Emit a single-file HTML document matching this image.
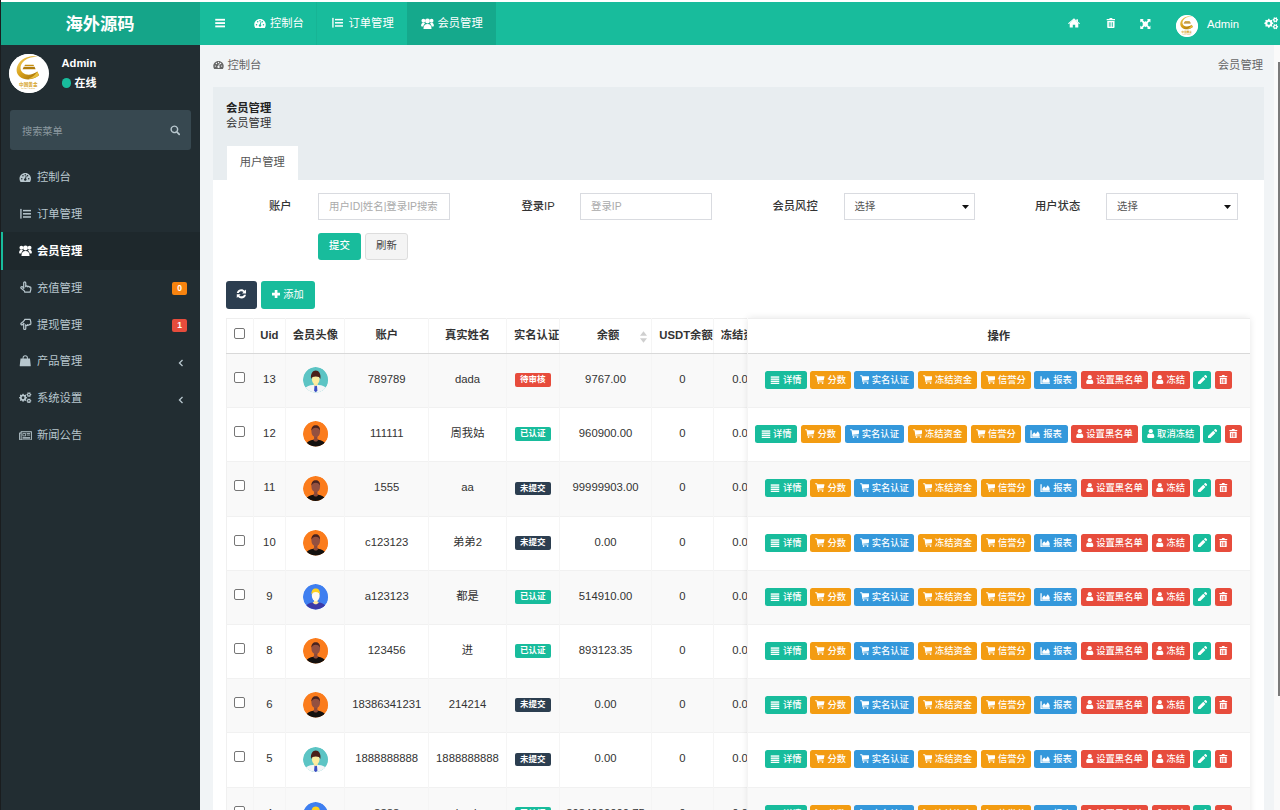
<!DOCTYPE html>
<html lang="zh-CN"><head><meta charset="utf-8"><title>会员管理</title>
<style>
*{box-sizing:border-box;margin:0;padding:0}
html,body{width:1280px;height:810px;overflow:hidden;background:#f1f4f6}
body{position:relative;font-family:"Liberation Sans","Noto Sans CJK SC",sans-serif;font-size:11.3px;color:#444;line-height:1.4}
svg{display:block}
.abs{position:absolute}
#topline{left:0;top:0;width:1280px;height:2px;background:#fff}
#leftline{left:0;top:0;width:1px;height:810px;background:#1a1d1f;z-index:50}
#logo{left:0;top:2px;width:200px;height:43px;background:#15a589;color:#fff;font-weight:bold;font-size:17.3px;text-align:center;line-height:44px;letter-spacing:0}
#nav{left:200px;top:2px;width:1080px;height:43px;background:#18bc9c;color:#fff}
#nav .tab{position:absolute;top:0;height:43px;line-height:43px;font-size:11.3px;white-space:nowrap}
#nav .tab svg{position:absolute}
#nav .tab span{position:absolute;top:0}
#side{left:0;top:45px;width:200px;height:765px;background:#222d32;color:#b8c7ce}
.avatar{border-radius:50%;background:#fff;overflow:hidden}
.mi{position:absolute;left:0;width:200px;height:36.8px;line-height:36.8px;font-size:11.3px;color:#b8c7ce}
.mi svg{position:absolute}
.mi span.t{position:absolute;left:37px;top:0.900px}
.mi.act{background:#1e282c;color:#fff;border-left:3px solid #18bc9c}
.mi.act span.t{left:34px;font-weight:bold}
.badge{position:absolute;left:172px;width:15px;height:12.500px;border-radius:2px;color:#fff;font-size:8.500px;font-weight:bold;line-height:12.500px;text-align:center}
#panel{left:213px;top:87px;width:1051px;height:740px;background:#fff}
#phead{left:0;top:0;width:1051px;height:93px;background:#e8edf0}
.lbl{position:absolute;font-size:11.3px;color:#333;font-weight:500;line-height:16px;white-space:nowrap}
.inp{position:absolute;height:26.500px;border:1px solid #d9dbe0;background:#fff;font-size:10.400px;color:#aaa;line-height:26px;padding-left:10px;white-space:nowrap}
.sel{color:#555}
.btn{position:absolute;border-radius:3px;color:#fff;text-align:center;white-space:nowrap}
table{border-collapse:collapse;table-layout:fixed}
#twrap table{width:547px;border-left:1px solid #f0f0f0;border-top:1px solid #eee}
th,td{border-right:1px solid #f5f5f5;text-align:center;vertical-align:middle;white-space:nowrap;overflow:hidden;padding:0;font-size:11.300px;color:#333}
th{height:35px;font-weight:bold;border-bottom:1px solid #d9d9d9;color:#333;background:#fff}
td{border-top:1px solid #f1f1f1}
tr.odd td{background:#f9f9f9}
tr.even td{background:#fff}
.cb{display:inline-block;width:11px;height:11px;border:1px solid #767676;border-radius:2px;background:#fff;position:relative;top:-1px}
.av{width:25.500px;height:25.500px;margin:0 auto;position:relative;top:0.600px;border-radius:50%;overflow:hidden}
.lab{display:inline-block;width:36px;height:13.500px;line-height:13px;border-radius:2px;color:#fff;font-size:8.500px;font-weight:bold;position:relative;top:-0.500px}
#fixcol{background:#fff;box-shadow:0 0 7px rgba(0,0,0,0.10)}
.ophead{height:36px;line-height:34px;text-align:center;font-weight:bold;color:#333;border-bottom:1px solid #d9d9d9;border-top:1px solid #eee;font-size:11.300px}
.oprow{text-align:center;white-space:nowrap;font-size:0;padding-top:17.200px;border-top:1px solid #f1f1f1}
.oprow.odd{background:#f9f9f9}
.ob{display:inline-block;height:18px;border-radius:2.500px;margin:0 1.780px;color:#fff;font-size:9.300px;font-weight:500;line-height:19.600px;vertical-align:top;white-space:nowrap;overflow:hidden;text-align:center}
.ob svg{display:inline-block;vertical-align:-1px;margin-right:2.500px}
.ob svg:last-child{margin-right:0}
.ob span{display:inline-block}
.suc{background:#18bc9c}.war{background:#f39c12}.inf{background:#3498db}.dan{background:#e74c3c}

td{padding-bottom:2px}
td:first-child{padding-bottom:0}
.ophead + .oprow{margin-top:-1px;border-top-color:#d9d9d9}

</style></head>
<body>
<div id="topline" class="abs"></div>
<div id="leftline" class="abs"></div>
<div id="logo" class="abs">海外源码</div>
<div id="nav" class="abs">
  <div class="abs" style="left:14.500px;top:15.800px"><svg width="10.500" height="10" viewBox="0 0 12 12" fill="currentColor" style=""><rect x="0" y="1" width="12" height="2.2"/><rect x="0" y="5" width="12" height="2.2"/><rect x="0" y="9" width="12" height="2.2"/></svg></div>
  <div class="tab" style="left:43px;width:74px"><div class="abs" style="left:10.500px;top:15.500px"><svg width="12" height="11" viewBox="0 0 14 13" fill="currentColor" style=""><path d="M7 1.2C3.2 1.2 0.2 4.2 0.2 7.9c0 1.3 0.4 2.5 1 3.5 0.1 0.2 0.3 0.3 0.5 0.3h10.6c0.2 0 0.4-0.1 0.5-0.3 0.6-1 1-2.2 1-3.5C13.8 4.2 10.8 1.2 7 1.2zM7 2.3a0.9 0.9 0 1 1 0 1.8 0.9 0.9 0 0 1 0-1.8zM2.9 8.8a0.9 0.9 0 1 1 0-1.8 0.9 0.9 0 0 1 0 1.8zM4.3 5.4a0.9 0.9 0 1 1 0-1.8 0.9 0.9 0 0 1 0 1.8zM8.6 5.1L7.9 7.8c0.5 0.3 0.8 0.9 0.6 1.5-0.2 0.8-1 1.3-1.8 1.1s-1.3-1-1.1-1.8c0.2-0.6 0.7-1 1.3-1.1l0.7-2.7c0.1-0.3 0.3-0.4 0.6-0.4 0.3 0.1 0.5 0.4 0.4 0.7zM9.7 5.4a0.9 0.9 0 1 1 0-1.8 0.9 0.9 0 0 1 0 1.8zM11.1 8.8a0.9 0.9 0 1 1 0-1.8 0.9 0.9 0 0 1 0 1.8z" fill-rule="evenodd"/></svg></div><span style="left:27px">控制台</span></div>
  <div class="tab" style="left:116px;width:90.500px;border-left:1px solid rgba(0,0,0,0.04)"><div class="abs" style="left:15px;top:15px"><svg width="11.500" height="11.500" viewBox="0 0 13 12" fill="currentColor" style=""><rect x="0.3" y="0.5" width="1.5" height="11"/><rect x="3.4" y="1.6" width="9" height="1.7"/><rect x="3.4" y="5.2" width="9" height="1.7"/><rect x="3.4" y="8.8" width="9" height="1.7"/></svg></div><span style="left:31.500px">订单管理</span></div>
  <div class="tab" style="left:206.500px;width:89.500px;background:#15a98c"><div class="abs" style="left:14px;top:15.500px"><svg width="13" height="11.500" viewBox="0 0 14 12.600" fill="currentColor" style=""><circle cx="7" cy="3.300" r="2.700"/><path d="M2.600 11.600c0-3.200 1.500-5 4.400-5s4.400 1.800 4.400 5c0 0.600-0.400 1-1 1H3.600c-0.600 0-1-0.400-1-1z"/><circle cx="2.500" cy="3" r="2.100"/><circle cx="11.500" cy="3" r="2.100"/><path d="M0 8.600c0-2.200 1-3.300 2.600-3.300 0.700 0 1.300 0.200 1.700 0.600C3.200 6.900 2.500 8 2.400 9.300H0.700C0.300 9.300 0 9 0 8.600zM14 8.600c0-2.200-1-3.300-2.600-3.300-0.700 0-1.300 0.200-1.700 0.600 1.100 1 1.800 2.100 1.900 3.400h1.700c0.400 0 0.700-0.300 0.700-0.700z"/></svg></div><span style="left:31px">会员管理</span></div>
  <div class="abs" style="left:868px;top:16.400px"><svg width="12" height="10" viewBox="0 0 14 11.500" fill="currentColor" style=""><path d="M7 1.800l5 4.200v4.600c0 0.300-0.200 0.500-0.500 0.500H8.400V7.800H5.600v3.300H2.500c-0.300 0-0.500-0.200-0.500-0.500V6L7 1.800z"/><path d="M7 0.300l2.800 2.400V1.500c0-0.100 0.100-0.200 0.200-0.200h1.400c0.100 0 0.200 0.100 0.200 0.200v2.700l2.200 1.900c0.100 0.100 0.100 0.200 0 0.300l-0.500 0.600c-0.100 0.100-0.200 0.100-0.300 0L7 1.900 1 7c-0.100 0.100-0.200 0.100-0.300 0L0.200 6.400c-0.100-0.100-0.100-0.200 0-0.300L7 0.300z"/></svg></div>
  <div class="abs" style="left:905.500px;top:16.200px"><svg width="9.800" height="10.200" viewBox="0.500 0 11 12" fill="currentColor" style=""><path fill-rule="evenodd" d="M4 1.200L4.500 0.300C4.600 0.100 4.800 0 5 0h2c0.200 0 0.400 0.100 0.500 0.300L8 1.200h2.500c0.300 0 0.500 0.200 0.500 0.500v0.600c0 0.200-0.100 0.300-0.300 0.300H1.300C1.100 2.600 1 2.500 1 2.300V1.700c0-0.300 0.200-0.500 0.500-0.500H4zM1.700 3.400h8.600v7.300c0 0.700-0.600 1.300-1.300 1.300H3c-0.700 0-1.300-0.600-1.300-1.300V3.400zM3.600 5v5.200h0.900V5H3.600zM5.500 5v5.200h0.900V5H5.500zM7.400 5v5.200h0.900V5H7.400z"/></svg></div>
  <div class="abs" style="left:940.300px;top:16.600px"><svg width="10.700" height="10.200" viewBox="0 0 12 12" fill="currentColor" style=""><path d="M0 0h4.200L2.900 1.300 5 3.400 6 2.400 7 3.400 9.100 1.300 7.800 0H12v4.200L10.700 2.900 8.600 5l1 1-1 1 2.100 2.100L12 7.800V12H7.800l1.300-1.300L7 8.600 6 9.600 5 8.600 2.900 10.700 4.200 12H0V7.800l1.300 1.300L3.400 7l-1-1 1-1L1.300 2.900 0 4.200z"/></svg></div>
  <div class="abs avatar" style="left:976px;top:12.500px;width:22px;height:22px"><svg width="22" height="22" viewBox="0 0 40 40"><defs><linearGradient id="gga" x1="0" y1="0" x2="1" y2="1"><stop offset="0" stop-color="#f3d266"/><stop offset="0.45" stop-color="#d9a21b"/><stop offset="1" stop-color="#9a6a08"/></linearGradient></defs><circle cx="20" cy="20" r="20" fill="#fff"/><path d="M29.500 2.900C24 1.600 16 2.600 11 8 6.500 13 6.800 19.500 11 23c5 4.200 14 3.600 19.500-1.400l-1.800-3.800C24 21.500 17.500 22 14 19 10.500 16 11 10.500 15.500 6.800 19.500 3.600 25 2.800 29.500 2.900z" fill="url(#gga)"/><path d="M16.300 10.800h8.600l0.500 1.500h-9.800z" fill="#c58f12"/><path d="M15 13h11l1 2.400H13.800z" fill="#b17c0c"/><path d="M28.700 17.800l1.800 3.800c-3 2.600-7 3.600-10.500 3.400 3.500-1 6.500-3.400 8.700-7.200z" fill="#e8bf3c"/><text x="19.600" y="33" font-size="4.700" font-weight="bold" text-anchor="middle" fill="#d6a11c" font-family="'Liberation Sans','Noto Sans CJK SC',sans-serif">中国黄金</text><text x="19.500" y="35.900" font-size="2.300" text-anchor="middle" fill="#d6a11c" font-family="'Liberation Sans',sans-serif">CHINA GOLD</text></svg></div>
  <div class="abs" style="left:1007px;top:1.300px;line-height:43px;font-size:11.300px">Admin</div>
  <div class="abs" style="left:1062.500px;top:15.300px"><svg width="16.500" height="12.500" viewBox="0 0 14.500 13" fill="currentColor" style=""><path fill-rule="evenodd" d="M9.37 5.95 L9.37 7.05 L8.26 7.51 L7.93 8.30 L8.39 9.42 L7.62 10.19 L6.50 9.73 L5.71 10.06 L5.25 11.17 L4.15 11.17 L3.69 10.06 L2.90 9.73 L1.78 10.19 L1.01 9.42 L1.47 8.30 L1.14 7.51 L0.03 7.05 L0.03 5.95 L1.14 5.49 L1.47 4.70 L1.01 3.58 L1.78 2.81 L2.90 3.27 L3.69 2.94 L4.15 1.83 L5.25 1.83 L5.71 2.94 L6.50 3.27 L7.62 2.81 L8.39 3.58 L7.93 4.70 L8.26 5.49Z M3.10 6.50 a1.60 1.60 0 1 0 3.20 0 a1.60 1.60 0 1 0 -3.20 0Z M14.35 2.38 L14.35 3.42 L13.57 3.64 L13.17 4.33 L13.38 5.11 L12.47 5.63 L11.90 5.06 L11.10 5.06 L10.53 5.63 L9.62 5.11 L9.83 4.33 L9.43 3.64 L8.65 3.42 L8.65 2.38 L9.43 2.16 L9.83 1.47 L9.62 0.69 L10.53 0.17 L11.10 0.74 L11.90 0.74 L12.47 0.17 L13.38 0.69 L13.17 1.47 L13.57 2.16Z M10.60 2.90 a0.90 0.90 0 1 0 1.80 0 a0.90 0.90 0 1 0 -1.80 0Z M14.35 9.58 L14.35 10.62 L13.57 10.84 L13.17 11.53 L13.38 12.31 L12.47 12.83 L11.90 12.26 L11.10 12.26 L10.53 12.83 L9.62 12.31 L9.83 11.53 L9.43 10.84 L8.65 10.62 L8.65 9.58 L9.43 9.36 L9.83 8.67 L9.62 7.89 L10.53 7.37 L11.10 7.94 L11.90 7.94 L12.47 7.37 L13.38 7.89 L13.17 8.67 L13.57 9.36Z M10.60 10.10 a0.90 0.90 0 1 0 1.80 0 a0.90 0.90 0 1 0 -1.80 0Z"/></svg></div>
</div>
<div id="side" class="abs">
  <div class="abs avatar" style="left:9.400px;top:8.600px;width:39.400px;height:39.400px"><svg width="39.4" height="39.4" viewBox="0 0 40 40"><defs><linearGradient id="ggb" x1="0" y1="0" x2="1" y2="1"><stop offset="0" stop-color="#f3d266"/><stop offset="0.45" stop-color="#d9a21b"/><stop offset="1" stop-color="#9a6a08"/></linearGradient></defs><circle cx="20" cy="20" r="20" fill="#fff"/><path d="M29.500 2.900C24 1.600 16 2.600 11 8 6.500 13 6.800 19.500 11 23c5 4.200 14 3.600 19.500-1.400l-1.800-3.800C24 21.500 17.500 22 14 19 10.500 16 11 10.500 15.500 6.800 19.500 3.600 25 2.800 29.500 2.900z" fill="url(#ggb)"/><path d="M16.300 10.800h8.600l0.500 1.500h-9.800z" fill="#c58f12"/><path d="M15 13h11l1 2.400H13.800z" fill="#b17c0c"/><path d="M28.700 17.800l1.800 3.800c-3 2.600-7 3.600-10.500 3.400 3.500-1 6.500-3.400 8.700-7.200z" fill="#e8bf3c"/><text x="19.600" y="33" font-size="4.700" font-weight="bold" text-anchor="middle" fill="#d6a11c" font-family="'Liberation Sans','Noto Sans CJK SC',sans-serif">中国黄金</text><text x="19.500" y="35.900" font-size="2.300" text-anchor="middle" fill="#d6a11c" font-family="'Liberation Sans',sans-serif">CHINA GOLD</text></svg></div>
  <div class="abs" style="left:61.500px;top:9.400px;color:#fff;font-weight:bold;font-size:11.200px;line-height:18px">Admin</div>
  <div class="abs" style="left:61.500px;top:33px;width:9.500px;height:9.500px;border-radius:50%;background:#18bc9c"></div>
  <div class="abs" style="left:74.500px;top:28.500px;color:#fff;font-weight:bold;font-size:11px;line-height:18px">在线</div>
  <div class="abs" style="left:9.500px;top:65px;width:181.500px;height:40px;border-radius:3px;background:#374850"></div>
  <div class="abs" style="left:22px;top:66.500px;line-height:40px;font-size:10.200px;color:#8b989f">搜索菜单</div>
  <div class="abs" style="left:169.500px;top:80px;color:#b8c7ce"><svg width="10.500" height="10.500" viewBox="0 0 12.500 12.500" fill="currentColor" style=""><path fill-rule="evenodd" d="M5.200 0.500a4.700 4.700 0 0 1 3.900 7.300l2.600 2.600c0.400 0.400 0.400 1 0 1.400s-1 0.400-1.400 0L7.700 9.200A4.700 4.700 0 1 1 5.200 0.500zM5.200 2.200a3 3 0 1 0 0 6 3 3 0 0 0 0-6z"/></svg></div>

  <div class="mi" style="top:113.600px"><div class="abs" style="left:19px;top:13px"><svg width="12.500" height="11" viewBox="0 0 14 13" fill="currentColor" style=""><path d="M7 1.2C3.2 1.2 0.2 4.2 0.2 7.9c0 1.3 0.4 2.5 1 3.5 0.1 0.2 0.3 0.3 0.5 0.3h10.6c0.2 0 0.4-0.1 0.5-0.3 0.6-1 1-2.2 1-3.5C13.8 4.2 10.8 1.2 7 1.2zM7 2.3a0.9 0.9 0 1 1 0 1.8 0.9 0.9 0 0 1 0-1.8zM2.9 8.8a0.9 0.9 0 1 1 0-1.8 0.9 0.9 0 0 1 0 1.8zM4.3 5.4a0.9 0.9 0 1 1 0-1.8 0.9 0.9 0 0 1 0 1.8zM8.6 5.1L7.9 7.8c0.5 0.3 0.8 0.9 0.6 1.5-0.2 0.8-1 1.3-1.8 1.1s-1.3-1-1.1-1.8c0.2-0.6 0.7-1 1.3-1.1l0.7-2.7c0.1-0.3 0.3-0.4 0.6-0.4 0.3 0.1 0.5 0.4 0.4 0.7zM9.7 5.4a0.9 0.9 0 1 1 0-1.8 0.9 0.9 0 0 1 0 1.8zM11.1 8.8a0.9 0.9 0 1 1 0-1.8 0.9 0.9 0 0 1 0 1.8z" fill-rule="evenodd"/></svg></div><span class="t">控制台</span></div>
  <div class="mi" style="top:150.400px"><div class="abs" style="left:19.500px;top:12.500px"><svg width="11.500" height="11.500" viewBox="0 0 13 12" fill="currentColor" style=""><rect x="0.3" y="0.5" width="1.5" height="11"/><rect x="3.4" y="1.6" width="9" height="1.7"/><rect x="3.4" y="5.2" width="9" height="1.7"/><rect x="3.4" y="8.8" width="9" height="1.7"/></svg></div><span class="t">订单管理</span></div>
  <div class="mi act" style="top:187.200px;height:38px"><div class="abs" style="left:16px;top:12.500px"><svg width="13" height="11.500" viewBox="0 0 14 12.600" fill="currentColor" style=""><circle cx="7" cy="3.300" r="2.700"/><path d="M2.600 11.600c0-3.200 1.500-5 4.400-5s4.400 1.800 4.400 5c0 0.600-0.400 1-1 1H3.600c-0.600 0-1-0.400-1-1z"/><circle cx="2.500" cy="3" r="2.100"/><circle cx="11.500" cy="3" r="2.100"/><path d="M0 8.600c0-2.200 1-3.300 2.600-3.300 0.700 0 1.300 0.200 1.700 0.600C3.200 6.900 2.500 8 2.400 9.300H0.700C0.300 9.300 0 9 0 8.600zM14 8.600c0-2.200-1-3.300-2.600-3.300-0.700 0-1.300 0.200-1.700 0.600 1.100 1 1.800 2.100 1.900 3.400h1.700c0.400 0 0.700-0.300 0.700-0.700z"/></svg></div><span class="t">会员管理</span></div>
  <div class="mi" style="top:224px"><div class="abs" style="left:19.500px;top:12px"><svg width="12" height="12.500" viewBox="0.500 0 12.300 12.500" fill="currentColor" style=""><g fill="none" stroke="currentColor" stroke-width="1.250" stroke-linejoin="round" stroke-linecap="round"><path d="M4.300 7.200V1.900a1.050 1.050 0 0 1 2.100 0V5.300"/><path d="M6.400 5.600a0.950 0.950 0 0 1 1.900 0.200a0.950 0.950 0 0 1 1.800 0.400a0.900 0.900 0 0 1 1.500 0.800V8.200c0 1.200-0.700 1.900-0.700 3.100H5.400c0-0.900-0.400-1.400-1.500-2.200L1.700 7.300a1 1 0 0 1 1.300-1.500L4.300 7"/></g></svg></div><span class="t">充值管理</span><div class="badge" style="top:13.300px;background:#f7830f">0</div></div>
  <div class="mi" style="top:260.800px"><div class="abs" style="left:19.500px;top:12px"><svg width="12" height="12.500" viewBox="0.500 0 12.300 12.500" fill="currentColor" style=""><g transform="translate(0 12.500) scale(1 -1)"><g fill="none" stroke="currentColor" stroke-width="1.250" stroke-linejoin="round" stroke-linecap="round"><path d="M4.300 7.200V1.900a1.050 1.050 0 0 1 2.100 0V5.300"/><path d="M6.400 5.600a0.950 0.950 0 0 1 1.900 0.200a0.950 0.950 0 0 1 1.800 0.400a0.900 0.900 0 0 1 1.500 0.800V8.200c0 1.200-0.700 1.900-0.700 3.100H5.400c0-0.900-0.400-1.400-1.500-2.200L1.700 7.300a1 1 0 0 1 1.300-1.500L4.300 7"/></g></g></svg></div><span class="t">提现管理</span><div class="badge" style="top:13.300px;background:#e74c3c">1</div></div>
  <div class="mi" style="top:297.600px"><div class="abs" style="left:19px;top:12px"><svg width="12.500" height="12" viewBox="0 0 14 13" fill="currentColor" style=""><path d="M4 3.600V3a3 3 0 0 1 6 0v0.600h2.300l0.900 8.200c0 0.400-0.300 0.700-0.700 0.700H1.500c-0.400 0-0.700-0.300-0.700-0.700l0.900-8.200H4zM5.100 3.600h3.800V3a1.900 1.900 0 0 0-3.800 0v0.600z" fill-rule="evenodd"/></svg></div><span class="t">产品管理</span><div class="abs" style="left:178.300px;top:16.200px"><svg width="5.500" height="8" viewBox="0 0 7 10.400" fill="currentColor" style=""><path d="M5.200 0.600L6.400 1.800 3 5.200 6.400 8.600 5.200 9.800 0.600 5.200z"/></svg></div></div>
  <div class="mi" style="top:334.400px"><div class="abs" style="left:19px;top:12.500px"><svg width="12.500" height="11.500" viewBox="0 0 14.500 13" fill="currentColor" style=""><path fill-rule="evenodd" d="M9.37 5.95 L9.37 7.05 L8.26 7.51 L7.93 8.30 L8.39 9.42 L7.62 10.19 L6.50 9.73 L5.71 10.06 L5.25 11.17 L4.15 11.17 L3.69 10.06 L2.90 9.73 L1.78 10.19 L1.01 9.42 L1.47 8.30 L1.14 7.51 L0.03 7.05 L0.03 5.95 L1.14 5.49 L1.47 4.70 L1.01 3.58 L1.78 2.81 L2.90 3.27 L3.69 2.94 L4.15 1.83 L5.25 1.83 L5.71 2.94 L6.50 3.27 L7.62 2.81 L8.39 3.58 L7.93 4.70 L8.26 5.49Z M3.10 6.50 a1.60 1.60 0 1 0 3.20 0 a1.60 1.60 0 1 0 -3.20 0Z M14.35 2.38 L14.35 3.42 L13.57 3.64 L13.17 4.33 L13.38 5.11 L12.47 5.63 L11.90 5.06 L11.10 5.06 L10.53 5.63 L9.62 5.11 L9.83 4.33 L9.43 3.64 L8.65 3.42 L8.65 2.38 L9.43 2.16 L9.83 1.47 L9.62 0.69 L10.53 0.17 L11.10 0.74 L11.90 0.74 L12.47 0.17 L13.38 0.69 L13.17 1.47 L13.57 2.16Z M10.60 2.90 a0.90 0.90 0 1 0 1.80 0 a0.90 0.90 0 1 0 -1.80 0Z M14.35 9.58 L14.35 10.62 L13.57 10.84 L13.17 11.53 L13.38 12.31 L12.47 12.83 L11.90 12.26 L11.10 12.26 L10.53 12.83 L9.62 12.31 L9.83 11.53 L9.43 10.84 L8.65 10.62 L8.65 9.58 L9.43 9.36 L9.83 8.67 L9.62 7.89 L10.53 7.37 L11.10 7.94 L11.90 7.94 L12.47 7.37 L13.38 7.89 L13.17 8.67 L13.57 9.36Z M10.60 10.10 a0.90 0.90 0 1 0 1.80 0 a0.90 0.90 0 1 0 -1.80 0Z"/></svg></div><span class="t">系统设置</span><div class="abs" style="left:178.300px;top:16.200px"><svg width="5.500" height="8" viewBox="0 0 7 10.400" fill="currentColor" style=""><path d="M5.200 0.600L6.400 1.800 3 5.200 6.400 8.600 5.200 9.800 0.600 5.200z"/></svg></div></div>
  <div class="mi" style="top:371.200px"><div class="abs" style="left:18.500px;top:13.500px"><svg width="13" height="10" viewBox="0 0 14 11" fill="currentColor" style=""><path fill-rule="evenodd" d="M2.200 1.500h11.300c0.300 0 0.500 0.200 0.500 0.500v8.300c0 0.700-0.600 1.200-1.200 1.200H1.400C0.600 11.500 0 10.900 0 10.200V3.300c0-0.300 0.200-0.500 0.500-0.500h1.200V2c0-0.300 0.200-0.500 0.500-0.500zM2.700 2.500v7.700c0 0.200-0.100 0.300-0.300 0.300h10.400c0.100 0 0.200-0.100 0.200-0.200V2.500H2.700zM1 3.800v6.400c0 0.200 0.100 0.300 0.300 0.300s0.400-0.100 0.400-0.300V3.800H1z"/><rect x="3.700" y="3.500" width="3.700" height="3.400"/><rect x="4.500" y="4.300" width="2.100" height="1.800" fill="#222d32"/><rect x="8.300" y="3.500" width="3.800" height="0.900"/><rect x="8.300" y="5.100" width="3.800" height="0.900"/><rect x="3.700" y="7.700" width="8.400" height="0.900"/><rect x="3.700" y="9" width="8.400" height="0.700"/></svg></div><span class="t">新闻公告</span></div>
</div>

<div class="abs" style="left:213px;top:60px;color:#666"><svg width="11" height="10" viewBox="0 0 14 13" fill="currentColor" style=""><path d="M7 1.2C3.2 1.2 0.2 4.2 0.2 7.9c0 1.3 0.4 2.5 1 3.5 0.1 0.2 0.3 0.3 0.5 0.3h10.6c0.2 0 0.4-0.1 0.5-0.3 0.6-1 1-2.2 1-3.5C13.8 4.2 10.8 1.2 7 1.2zM7 2.3a0.9 0.9 0 1 1 0 1.8 0.9 0.9 0 0 1 0-1.8zM2.9 8.8a0.9 0.9 0 1 1 0-1.8 0.9 0.9 0 0 1 0 1.8zM4.3 5.4a0.9 0.9 0 1 1 0-1.8 0.9 0.9 0 0 1 0 1.8zM8.6 5.1L7.9 7.8c0.5 0.3 0.8 0.9 0.6 1.5-0.2 0.8-1 1.3-1.8 1.1s-1.3-1-1.1-1.8c0.2-0.6 0.7-1 1.3-1.1l0.7-2.7c0.1-0.3 0.3-0.4 0.6-0.4 0.3 0.1 0.5 0.4 0.4 0.7zM9.7 5.4a0.9 0.9 0 1 1 0-1.8 0.9 0.9 0 0 1 0 1.8zM11.1 8.8a0.9 0.9 0 1 1 0-1.8 0.9 0.9 0 0 1 0 1.8z" fill-rule="evenodd"/></svg></div>
<div class="abs" style="left:227.500px;top:57px;line-height:16px;color:#666;font-size:11.300px">控制台</div>
<div class="abs" style="right:17px;top:57px;line-height:16px;color:#666;font-size:11.300px">会员管理</div>

<div id="panel" class="abs">
  <div id="phead" class="abs"></div>
  <div class="abs" style="left:13px;top:12.500px;font-weight:bold;color:#222;line-height:16px">会员管理</div>
  <div class="abs" style="left:13px;top:28px;color:#333;line-height:16px">会员管理</div>
  <div class="abs" style="left:13.500px;top:59px;width:71.500px;height:34px;background:#fff;text-align:center;line-height:32px;color:#555">用户管理</div>

  <div class="lbl" style="left:56px;top:111px">账户</div>
  <div class="inp" style="left:105px;top:106px;width:131.500px">用户ID|姓名|登录IP搜索</div>
  <div class="lbl" style="left:308.500px;top:111px">登录IP</div>
  <div class="inp" style="left:367px;top:106px;width:132px">登录IP</div>
  <div class="lbl" style="left:559.500px;top:111px">会员风控</div>
  <div class="inp sel" style="left:630.500px;top:106px;width:131.500px">选择<div class="abs" style="left:117px;top:10.500px;color:#111"><svg width="7" height="4" viewBox="0 0 8 4.500" fill="currentColor" style=""><path d="M0 0h8L4 4.500z"/></svg></div></div>
  <div class="lbl" style="left:822px;top:111px">用户状态</div>
  <div class="inp sel" style="left:893px;top:106px;width:132px">选择<div class="abs" style="left:117px;top:10.500px;color:#111"><svg width="7" height="4" viewBox="0 0 8 4.500" fill="currentColor" style=""><path d="M0 0h8L4 4.500z"/></svg></div></div>

  <div class="btn" style="left:105px;top:146px;width:43px;height:26.500px;background:#18bc9c;line-height:26.500px;font-size:10.400px;font-weight:500">提交</div>
  <div class="btn" style="left:152px;top:146px;width:43px;height:26.500px;background:#f4f4f4;border:1px solid #ddd;color:#444;line-height:24.500px;font-size:10.400px">刷新</div>

  <div class="btn" style="left:13px;top:194px;width:31px;height:28px;background:#2c3e50"><div class="abs" style="left:10.400px;top:8.400px"><svg width="10.800" height="9.600" viewBox="0.600 0.600 10.800 10.800" fill="currentColor" style=""><path d="M11.200 7h-2.300c-0.500 1.200-1.600 1.900-2.900 1.900-0.900 0-1.700-0.400-2.300-1l1.500-1.500H0.800v4.400l1.400-1.400C3.200 10.500 4.500 11.200 6 11.200c2.600 0 4.800-1.800 5.200-4.200zM0.800 5h2.300C3.600 3.800 4.700 3.100 6 3.100c0.900 0 1.700 0.400 2.300 1L6.800 5.600h4.400V1.200L9.800 2.600C8.800 1.500 7.500 0.800 6 0.800 3.400 0.800 1.200 2.600 0.800 5z"/></svg></div></div>
  <div class="btn" style="left:47.700px;top:194px;width:54.500px;height:28px;background:#18bc9c;line-height:27px;font-size:10.200px;font-weight:normal;text-align:left"><div class="abs" style="left:11.200px;top:8.800px"><svg width="8.200" height="8.200" viewBox="0 0 11 11" fill="currentColor" style=""><path d="M3.700 0h3.600v3.700H11v3.600H7.300V11H3.700V7.300H0V3.700h3.700z"/></svg></div><span style="position:absolute;left:22.600px">添加</span></div>

  <div class="abs" id="twrap" style="left:13px;top:231px;width:521px;height:520px;overflow:hidden">
   <table>
    <colgroup><col style="width:26.500px"><col style="width:32.800px"><col style="width:59.100px"><col style="width:83.600px"><col style="width:78px"><col style="width:52.700px"><col style="width:92.700px"><col style="width:61.300px"><col style="width:60px"></colgroup>
    <thead><tr><th><i class="cb" style="top:0"></i></th><th>Uid</th><th>会员头像</th><th>账户</th><th>真实姓名</th><th style="text-align:left;padding-left:7px">实名认证</th><th style="position:relative;padding-left:5px">余额<div class="abs" style="right:4.500px;top:11.500px;color:#cfcfcf"><svg width="7" height="12" viewBox="0 0 6 10" fill="currentColor"><path d="M0 4L3 0l3 4zM0 6h6L3 10z"/></svg></div></th><th style="text-align:left;padding-left:7px">USDT余额</th><th class="cut" style="text-align:left;padding-left:7px">冻结资金</th></tr></thead>
    <tbody>
<tr class="odd" style="height:54px"><td><i class="cb"></i></td><td>13</td><td><div class="av"><svg width="25.500" height="25.500" viewBox="0 0 26 26"><circle cx="13" cy="13" r="13" fill="#5cc4c4"/><path d="M2.600 20.800C5.500 18.600 9 18 13 18s7.500 0.600 10.400 2.800A13 13 0 0 1 2.600 20.800z" fill="#f3f5f6"/><path d="M11.800 18.900h2.400l0.500 5.300-1.700 1.500-1.700-1.500z" fill="#3b50c4"/><path d="M11 15.500h4v2.800l-2 1.300-2-1.300z" fill="#fbe59a"/><ellipse cx="13" cy="12.800" rx="3.900" ry="4.900" fill="#fcec9f"/><path d="M8.300 12.200C7.400 6.500 10 3.500 13 3.500s5.600 3 4.700 8.700C17 10.300 15.600 9.600 13 9.600s-4 0.700-4.700 2.600z" fill="#4a1f1a"/></svg></div></td><td>789789</td><td>dada</td><td><span class="lab" style="background:#e74c3c">待审核</span></td><td>9767.00</td><td>0</td><td class="cut">0.00</td></tr>
<tr class="even" style="height:54px"><td><i class="cb"></i></td><td>12</td><td><div class="av"><svg width="25.500" height="25.500" viewBox="0 0 26 26"><circle cx="13" cy="13" r="13" fill="#fb7c1c"/><path d="M3.800 22.200C6.500 19.400 9.500 18.800 13 18.800s6.500 0.600 9.200 3.400A13 13 0 0 1 3.800 22.200z" fill="#14110f"/><path d="M10.300 19c0.800 1.300 1.700 2 2.700 2s1.900-0.700 2.700-2l-1-0.600v-3h-3.400v3z" fill="#8a4a3a"/><ellipse cx="13" cy="10.800" rx="4.400" ry="5.800" fill="#935040"/><path d="M8.600 10C8.300 6.200 10.300 4.300 13 4.300s4.700 1.900 4.400 5.700C16.600 7.600 15.200 6.800 13 6.800S9.400 7.600 8.600 10z" fill="#4a2420"/></svg></div></td><td>111111</td><td>周我姑</td><td><span class="lab" style="background:#18bc9c">已认证</span></td><td>960900.00</td><td>0</td><td class="cut">0.00</td></tr>
<tr class="odd" style="height:55px"><td><i class="cb"></i></td><td>11</td><td><div class="av"><svg width="25.500" height="25.500" viewBox="0 0 26 26"><circle cx="13" cy="13" r="13" fill="#fb7c1c"/><path d="M3.800 22.200C6.500 19.400 9.500 18.800 13 18.800s6.500 0.600 9.200 3.400A13 13 0 0 1 3.800 22.200z" fill="#14110f"/><path d="M10.300 19c0.800 1.300 1.700 2 2.700 2s1.900-0.700 2.700-2l-1-0.600v-3h-3.400v3z" fill="#8a4a3a"/><ellipse cx="13" cy="10.800" rx="4.400" ry="5.800" fill="#935040"/><path d="M8.600 10C8.300 6.200 10.300 4.300 13 4.300s4.700 1.900 4.400 5.700C16.600 7.600 15.200 6.800 13 6.800S9.400 7.600 8.600 10z" fill="#4a2420"/></svg></div></td><td>1555</td><td>aa</td><td><span class="lab" style="background:#2c3e50">未提交</span></td><td>99999903.00</td><td>0</td><td class="cut">0.00</td></tr>
<tr class="even" style="height:54px"><td><i class="cb"></i></td><td>10</td><td><div class="av"><svg width="25.500" height="25.500" viewBox="0 0 26 26"><circle cx="13" cy="13" r="13" fill="#fb7c1c"/><path d="M3.800 22.200C6.500 19.400 9.500 18.800 13 18.800s6.500 0.600 9.200 3.400A13 13 0 0 1 3.800 22.200z" fill="#14110f"/><path d="M10.300 19c0.800 1.300 1.700 2 2.700 2s1.900-0.700 2.700-2l-1-0.600v-3h-3.400v3z" fill="#8a4a3a"/><ellipse cx="13" cy="10.800" rx="4.400" ry="5.800" fill="#935040"/><path d="M8.600 10C8.300 6.200 10.300 4.300 13 4.300s4.700 1.900 4.400 5.700C16.600 7.600 15.200 6.800 13 6.800S9.400 7.600 8.600 10z" fill="#4a2420"/></svg></div></td><td>c123123</td><td>弟弟2</td><td><span class="lab" style="background:#2c3e50">未提交</span></td><td>0.00</td><td>0</td><td class="cut">0.00</td></tr>
<tr class="odd" style="height:54px"><td><i class="cb"></i></td><td>9</td><td><div class="av"><svg width="25.500" height="25.500" viewBox="0 0 26 26"><circle cx="13" cy="13" r="13" fill="#3f7ff0"/><path d="M3.300 21.600C6 19.200 9.500 18.600 13 18.600s7 0.600 9.700 3A13 13 0 0 1 3.300 21.600z" fill="#3b3aa8"/><path d="M9.800 18.900c1 1.200 2 1.800 3.200 1.800s2.200-0.600 3.200-1.800l-1.400-0.700v-2.700h-3.600v2.700z" fill="#ffe9a0"/><ellipse cx="13" cy="12" rx="4" ry="5.300" fill="#fffaf0"/><path d="M8.700 11C8.200 6.600 10.300 4.600 13 4.600s4.800 2 4.300 6.400C16.600 9 15.400 8.200 13 8.200S9.400 9 8.700 11z" fill="#ffd21e"/></svg></div></td><td>a123123</td><td>都是</td><td><span class="lab" style="background:#18bc9c">已认证</span></td><td>514910.00</td><td>0</td><td class="cut">0.00</td></tr>
<tr class="even" style="height:54px"><td><i class="cb"></i></td><td>8</td><td><div class="av"><svg width="25.500" height="25.500" viewBox="0 0 26 26"><circle cx="13" cy="13" r="13" fill="#fb7c1c"/><path d="M3.800 22.200C6.500 19.400 9.500 18.800 13 18.800s6.500 0.600 9.200 3.400A13 13 0 0 1 3.800 22.200z" fill="#14110f"/><path d="M10.300 19c0.800 1.300 1.700 2 2.700 2s1.900-0.700 2.700-2l-1-0.600v-3h-3.400v3z" fill="#8a4a3a"/><ellipse cx="13" cy="10.800" rx="4.400" ry="5.800" fill="#935040"/><path d="M8.600 10C8.300 6.200 10.300 4.300 13 4.300s4.700 1.900 4.400 5.700C16.600 7.600 15.200 6.800 13 6.800S9.400 7.600 8.600 10z" fill="#4a2420"/></svg></div></td><td>123456</td><td>进</td><td><span class="lab" style="background:#18bc9c">已认证</span></td><td>893123.35</td><td>0</td><td class="cut">0.00</td></tr>
<tr class="odd" style="height:54px"><td><i class="cb"></i></td><td>6</td><td><div class="av"><svg width="25.500" height="25.500" viewBox="0 0 26 26"><circle cx="13" cy="13" r="13" fill="#fb7c1c"/><path d="M3.800 22.200C6.500 19.400 9.500 18.800 13 18.800s6.500 0.600 9.200 3.400A13 13 0 0 1 3.800 22.200z" fill="#14110f"/><path d="M10.300 19c0.800 1.300 1.700 2 2.700 2s1.900-0.700 2.700-2l-1-0.600v-3h-3.400v3z" fill="#8a4a3a"/><ellipse cx="13" cy="10.800" rx="4.400" ry="5.800" fill="#935040"/><path d="M8.600 10C8.300 6.200 10.300 4.300 13 4.300s4.700 1.900 4.400 5.700C16.600 7.600 15.200 6.800 13 6.800S9.400 7.600 8.600 10z" fill="#4a2420"/></svg></div></td><td>18386341231</td><td>214214</td><td><span class="lab" style="background:#2c3e50">未提交</span></td><td>0.00</td><td>0</td><td class="cut">0.00</td></tr>
<tr class="even" style="height:55px"><td><i class="cb"></i></td><td>5</td><td><div class="av"><svg width="25.500" height="25.500" viewBox="0 0 26 26"><circle cx="13" cy="13" r="13" fill="#5cc4c4"/><path d="M2.600 20.800C5.500 18.600 9 18 13 18s7.500 0.600 10.400 2.800A13 13 0 0 1 2.600 20.800z" fill="#f3f5f6"/><path d="M11.800 18.900h2.400l0.500 5.300-1.700 1.500-1.700-1.500z" fill="#3b50c4"/><path d="M11 15.500h4v2.800l-2 1.300-2-1.300z" fill="#fbe59a"/><ellipse cx="13" cy="12.800" rx="3.900" ry="4.900" fill="#fcec9f"/><path d="M8.300 12.200C7.400 6.500 10 3.500 13 3.500s5.600 3 4.700 8.700C17 10.300 15.600 9.600 13 9.600s-4 0.700-4.700 2.600z" fill="#4a1f1a"/></svg></div></td><td>1888888888</td><td>1888888888</td><td><span class="lab" style="background:#2c3e50">未提交</span></td><td>0.00</td><td>0</td><td class="cut">0.00</td></tr>
<tr class="odd" style="height:54px"><td><i class="cb"></i></td><td>4</td><td><div class="av"><svg width="25.500" height="25.500" viewBox="0 0 26 26"><circle cx="13" cy="13" r="13" fill="#3f7ff0"/><path d="M3.300 21.600C6 19.200 9.500 18.600 13 18.600s7 0.600 9.700 3A13 13 0 0 1 3.300 21.600z" fill="#3b3aa8"/><path d="M9.800 18.900c1 1.200 2 1.800 3.200 1.800s2.200-0.600 3.200-1.800l-1.400-0.700v-2.700h-3.600v2.700z" fill="#ffe9a0"/><ellipse cx="13" cy="12" rx="4" ry="5.300" fill="#fffaf0"/><path d="M8.700 11C8.200 6.600 10.300 4.600 13 4.600s4.800 2 4.300 6.400C16.600 9 15.400 8.200 13 8.200S9.400 9 8.700 11z" fill="#ffd21e"/></svg></div></td><td>8888</td><td>dsada</td><td><span class="lab" style="background:#18bc9c">已认证</span></td><td>8934000000.75</td><td>0</td><td class="cut">0.00</td></tr>

    </tbody>
   </table>
  </div>
  <div class="abs" id="fixcol" style="left:534.600px;top:231px;width:502.300px;height:520px">
    <div class="ophead">操作</div>
<div class="oprow odd" style="height:54px"><a class="ob suc" style="width:41.800px"><svg width="10" height="8.500" viewBox="0 0 12 12" fill="currentColor" style=""><rect x="0" y="0.500" width="12" height="2"/><rect x="0" y="3.500" width="12" height="2"/><rect x="0" y="6.500" width="12" height="2"/><rect x="0" y="9.500" width="12" height="2"/></svg><span>详情</span></a><a class="ob war" style="width:40.500px"><svg width="9.500" height="9" viewBox="0 0 12.500 12" fill="currentColor" style=""><path d="M0.500 0.400h1.900c0.300 0 0.500 0.200 0.600 0.500l0.200 0.900h8.800c0.400 0 0.600 0.300 0.500 0.700l-0.900 4c-0.100 0.300-0.300 0.500-0.600 0.500L4.100 7.800l0.200 0.800h6.500c0.300 0 0.600 0.200 0.600 0.600s-0.300 0.600-0.600 0.600H3.800c-0.300 0-0.500-0.200-0.600-0.500L1.900 1.500H0.500C0.200 1.500 0 1.300 0 1S0.200 0.400 0.500 0.400z"/><circle cx="4.700" cy="10.900" r="1.100"/><circle cx="10" cy="10.900" r="1.100"/></svg><span>分数</span></a><a class="ob inf" style="width:59.700px"><svg width="9.500" height="9" viewBox="0 0 12.500 12" fill="currentColor" style=""><path d="M0.500 0.400h1.900c0.300 0 0.500 0.200 0.600 0.500l0.200 0.900h8.800c0.400 0 0.600 0.300 0.500 0.700l-0.900 4c-0.100 0.300-0.300 0.500-0.600 0.500L4.100 7.800l0.200 0.800h6.500c0.300 0 0.600 0.200 0.600 0.600s-0.300 0.600-0.600 0.600H3.800c-0.300 0-0.500-0.200-0.600-0.500L1.900 1.500H0.500C0.200 1.500 0 1.300 0 1S0.200 0.400 0.500 0.400z"/><circle cx="4.700" cy="10.900" r="1.100"/><circle cx="10" cy="10.900" r="1.100"/></svg><span>实名认证</span></a><a class="ob war" style="width:59.700px"><svg width="9.500" height="9" viewBox="0 0 12.500 12" fill="currentColor" style=""><path d="M0.500 0.400h1.900c0.300 0 0.500 0.200 0.600 0.500l0.200 0.900h8.800c0.400 0 0.600 0.300 0.500 0.700l-0.900 4c-0.100 0.300-0.300 0.500-0.600 0.500L4.100 7.800l0.200 0.800h6.500c0.300 0 0.600 0.200 0.600 0.600s-0.300 0.600-0.600 0.600H3.800c-0.300 0-0.500-0.200-0.600-0.500L1.900 1.500H0.500C0.200 1.500 0 1.300 0 1S0.200 0.400 0.500 0.400z"/><circle cx="4.700" cy="10.900" r="1.100"/><circle cx="10" cy="10.900" r="1.100"/></svg><span>冻结资金</span></a><a class="ob war" style="width:50px"><svg width="9.500" height="9" viewBox="0 0 12.500 12" fill="currentColor" style=""><path d="M0.500 0.400h1.900c0.300 0 0.500 0.200 0.600 0.500l0.200 0.900h8.800c0.400 0 0.600 0.300 0.500 0.700l-0.900 4c-0.100 0.300-0.300 0.500-0.600 0.500L4.100 7.800l0.200 0.800h6.500c0.300 0 0.600 0.200 0.600 0.600s-0.300 0.600-0.600 0.600H3.800c-0.300 0-0.500-0.200-0.600-0.500L1.900 1.500H0.500C0.200 1.500 0 1.300 0 1S0.200 0.400 0.500 0.400z"/><circle cx="4.700" cy="10.900" r="1.100"/><circle cx="10" cy="10.900" r="1.100"/></svg><span>信誉分</span></a><a class="ob inf" style="width:43px"><svg width="10.500" height="8.500" viewBox="0 0 13 11.500" fill="currentColor" style=""><path d="M0 0.300h1.700v9.500H13v1.700H0z"/><path d="M2.500 9V6.200L5 3l2.300 2.300L10 1.800l2.400 3.600V9z"/></svg><span>报表</span></a><a class="ob dan" style="width:67px"><svg width="7.500" height="9" viewBox="0 0 10 12" fill="currentColor" style=""><circle cx="5" cy="2.900" r="2.800"/><path d="M0.200 10.400C0.200 7.600 1.600 6 3.100 6c0.500 0.400 1.200 0.700 1.900 0.700S6.400 6.400 6.900 6c1.500 0 2.900 1.600 2.900 4.400 0 0.900-0.600 1.600-1.400 1.600H1.600c-0.800 0-1.400-0.700-1.400-1.600z"/></svg><span>设置黑名单</span></a><a class="ob dan" style="width:38.400px"><svg width="7.500" height="9" viewBox="0 0 10 12" fill="currentColor" style=""><circle cx="5" cy="2.900" r="2.800"/><path d="M0.200 10.400C0.200 7.600 1.600 6 3.100 6c0.500 0.400 1.200 0.700 1.900 0.700S6.400 6.400 6.900 6c1.500 0 2.900 1.600 2.900 4.400 0 0.900-0.600 1.600-1.400 1.600H1.600c-0.800 0-1.400-0.700-1.400-1.600z"/></svg><span>冻结</span></a><a class="ob suc" style="width:17.700px"><svg width="9.200" height="9.200" viewBox="0 0 12 12" fill="currentColor" style=""><path d="M0 12v-2.800l6.900-6.900 2.800 2.800L2.800 12H0zM7.700 1.500l1.200-1.200c0.400-0.400 1-0.400 1.400 0l1.400 1.400c0.400 0.400 0.400 1 0 1.400L10.500 4.300 7.700 1.500z"/></svg></a><a class="ob dan" style="width:17.700px"><svg width="8.600" height="9.600" viewBox="0.600 0 10.800 12" fill="currentColor" style=""><path fill-rule="evenodd" d="M4 1.200L4.500 0.300C4.600 0.100 4.800 0 5 0h2c0.200 0 0.400 0.100 0.500 0.300L8 1.200h2.500c0.300 0 0.500 0.200 0.500 0.500v0.600c0 0.200-0.100 0.300-0.300 0.300H1.300C1.100 2.600 1 2.500 1 2.300V1.700c0-0.300 0.200-0.500 0.500-0.500H4zM1.700 3.400h8.600v7.300c0 0.700-0.600 1.300-1.300 1.300H3c-0.700 0-1.300-0.600-1.300-1.300V3.400zM3.600 5v5.200h0.900V5H3.600zM5.500 5v5.200h0.900V5H5.500zM7.400 5v5.200h0.900V5H7.400z"/></svg></a></div>
<div class="oprow even" style="height:54px"><a class="ob suc" style="width:41.800px"><svg width="10" height="8.500" viewBox="0 0 12 12" fill="currentColor" style=""><rect x="0" y="0.500" width="12" height="2"/><rect x="0" y="3.500" width="12" height="2"/><rect x="0" y="6.500" width="12" height="2"/><rect x="0" y="9.500" width="12" height="2"/></svg><span>详情</span></a><a class="ob war" style="width:40.500px"><svg width="9.500" height="9" viewBox="0 0 12.500 12" fill="currentColor" style=""><path d="M0.500 0.400h1.900c0.300 0 0.500 0.200 0.600 0.500l0.200 0.900h8.800c0.400 0 0.600 0.300 0.500 0.700l-0.900 4c-0.100 0.300-0.300 0.500-0.600 0.500L4.100 7.800l0.200 0.800h6.500c0.300 0 0.600 0.200 0.600 0.600s-0.300 0.600-0.600 0.600H3.800c-0.300 0-0.500-0.200-0.600-0.500L1.900 1.500H0.500C0.200 1.500 0 1.300 0 1S0.200 0.400 0.500 0.400z"/><circle cx="4.700" cy="10.900" r="1.100"/><circle cx="10" cy="10.900" r="1.100"/></svg><span>分数</span></a><a class="ob inf" style="width:59.700px"><svg width="9.500" height="9" viewBox="0 0 12.500 12" fill="currentColor" style=""><path d="M0.500 0.400h1.900c0.300 0 0.500 0.200 0.600 0.500l0.200 0.900h8.800c0.400 0 0.600 0.300 0.500 0.700l-0.900 4c-0.100 0.300-0.300 0.500-0.600 0.500L4.100 7.800l0.200 0.800h6.500c0.300 0 0.600 0.200 0.600 0.600s-0.300 0.600-0.600 0.600H3.800c-0.300 0-0.500-0.200-0.600-0.500L1.900 1.500H0.500C0.200 1.500 0 1.300 0 1S0.200 0.400 0.500 0.400z"/><circle cx="4.700" cy="10.900" r="1.100"/><circle cx="10" cy="10.900" r="1.100"/></svg><span>实名认证</span></a><a class="ob war" style="width:59.700px"><svg width="9.500" height="9" viewBox="0 0 12.500 12" fill="currentColor" style=""><path d="M0.500 0.400h1.900c0.300 0 0.500 0.200 0.600 0.500l0.200 0.900h8.800c0.400 0 0.600 0.300 0.500 0.700l-0.900 4c-0.100 0.300-0.300 0.500-0.600 0.500L4.100 7.800l0.200 0.800h6.500c0.300 0 0.600 0.200 0.600 0.600s-0.300 0.600-0.600 0.600H3.800c-0.300 0-0.500-0.200-0.600-0.500L1.900 1.500H0.500C0.200 1.500 0 1.300 0 1S0.200 0.400 0.500 0.400z"/><circle cx="4.700" cy="10.900" r="1.100"/><circle cx="10" cy="10.900" r="1.100"/></svg><span>冻结资金</span></a><a class="ob war" style="width:50px"><svg width="9.500" height="9" viewBox="0 0 12.500 12" fill="currentColor" style=""><path d="M0.500 0.400h1.900c0.300 0 0.500 0.200 0.600 0.500l0.200 0.900h8.800c0.400 0 0.600 0.300 0.500 0.700l-0.900 4c-0.100 0.300-0.300 0.500-0.600 0.500L4.100 7.800l0.200 0.800h6.500c0.300 0 0.600 0.200 0.600 0.600s-0.300 0.600-0.600 0.600H3.800c-0.300 0-0.500-0.200-0.600-0.500L1.900 1.500H0.500C0.200 1.500 0 1.300 0 1S0.200 0.400 0.500 0.400z"/><circle cx="4.700" cy="10.900" r="1.100"/><circle cx="10" cy="10.900" r="1.100"/></svg><span>信誉分</span></a><a class="ob inf" style="width:43px"><svg width="10.500" height="8.500" viewBox="0 0 13 11.500" fill="currentColor" style=""><path d="M0 0.300h1.700v9.500H13v1.700H0z"/><path d="M2.500 9V6.200L5 3l2.300 2.300L10 1.800l2.400 3.600V9z"/></svg><span>报表</span></a><a class="ob dan" style="width:67px"><svg width="7.500" height="9" viewBox="0 0 10 12" fill="currentColor" style=""><circle cx="5" cy="2.900" r="2.800"/><path d="M0.200 10.400C0.200 7.600 1.600 6 3.100 6c0.500 0.400 1.200 0.700 1.900 0.700S6.400 6.400 6.900 6c1.500 0 2.900 1.600 2.900 4.400 0 0.900-0.600 1.600-1.400 1.600H1.600c-0.800 0-1.400-0.700-1.400-1.600z"/></svg><span>设置黑名单</span></a><a class="ob suc" style="width:58.300px"><svg width="7.500" height="9" viewBox="0 0 10 12" fill="currentColor" style=""><circle cx="5" cy="2.900" r="2.800"/><path d="M0.200 10.400C0.200 7.600 1.600 6 3.100 6c0.500 0.400 1.200 0.700 1.900 0.700S6.400 6.400 6.900 6c1.500 0 2.900 1.600 2.900 4.400 0 0.900-0.600 1.600-1.400 1.600H1.600c-0.800 0-1.400-0.700-1.400-1.600z"/></svg><span>取消冻结</span></a><a class="ob suc" style="width:17.700px"><svg width="9.200" height="9.200" viewBox="0 0 12 12" fill="currentColor" style=""><path d="M0 12v-2.800l6.900-6.900 2.800 2.800L2.800 12H0zM7.700 1.500l1.200-1.200c0.400-0.400 1-0.400 1.400 0l1.400 1.400c0.400 0.400 0.400 1 0 1.400L10.500 4.300 7.700 1.500z"/></svg></a><a class="ob dan" style="width:17.700px"><svg width="8.600" height="9.600" viewBox="0.600 0 10.800 12" fill="currentColor" style=""><path fill-rule="evenodd" d="M4 1.200L4.500 0.300C4.600 0.100 4.800 0 5 0h2c0.200 0 0.400 0.100 0.500 0.300L8 1.200h2.500c0.300 0 0.500 0.200 0.500 0.500v0.600c0 0.200-0.100 0.300-0.300 0.300H1.300C1.100 2.600 1 2.500 1 2.300V1.700c0-0.300 0.200-0.500 0.500-0.500H4zM1.700 3.400h8.600v7.300c0 0.700-0.600 1.300-1.300 1.300H3c-0.700 0-1.300-0.600-1.300-1.300V3.400zM3.600 5v5.200h0.900V5H3.600zM5.500 5v5.200h0.900V5H5.500zM7.400 5v5.200h0.900V5H7.400z"/></svg></a></div>
<div class="oprow odd" style="height:55px"><a class="ob suc" style="width:41.800px"><svg width="10" height="8.500" viewBox="0 0 12 12" fill="currentColor" style=""><rect x="0" y="0.500" width="12" height="2"/><rect x="0" y="3.500" width="12" height="2"/><rect x="0" y="6.500" width="12" height="2"/><rect x="0" y="9.500" width="12" height="2"/></svg><span>详情</span></a><a class="ob war" style="width:40.500px"><svg width="9.500" height="9" viewBox="0 0 12.500 12" fill="currentColor" style=""><path d="M0.500 0.400h1.900c0.300 0 0.500 0.200 0.600 0.500l0.200 0.900h8.800c0.400 0 0.600 0.300 0.500 0.700l-0.900 4c-0.100 0.300-0.300 0.500-0.600 0.500L4.100 7.800l0.200 0.800h6.500c0.300 0 0.600 0.200 0.600 0.600s-0.300 0.600-0.600 0.600H3.800c-0.300 0-0.500-0.200-0.600-0.500L1.900 1.500H0.500C0.200 1.500 0 1.300 0 1S0.200 0.400 0.500 0.400z"/><circle cx="4.700" cy="10.900" r="1.100"/><circle cx="10" cy="10.900" r="1.100"/></svg><span>分数</span></a><a class="ob inf" style="width:59.700px"><svg width="9.500" height="9" viewBox="0 0 12.500 12" fill="currentColor" style=""><path d="M0.500 0.400h1.900c0.300 0 0.500 0.200 0.600 0.500l0.200 0.900h8.800c0.400 0 0.600 0.300 0.500 0.700l-0.900 4c-0.100 0.300-0.300 0.500-0.600 0.500L4.100 7.800l0.200 0.800h6.500c0.300 0 0.600 0.200 0.600 0.600s-0.300 0.600-0.600 0.600H3.800c-0.300 0-0.500-0.200-0.600-0.500L1.900 1.500H0.500C0.200 1.500 0 1.300 0 1S0.200 0.400 0.500 0.400z"/><circle cx="4.700" cy="10.900" r="1.100"/><circle cx="10" cy="10.900" r="1.100"/></svg><span>实名认证</span></a><a class="ob war" style="width:59.700px"><svg width="9.500" height="9" viewBox="0 0 12.500 12" fill="currentColor" style=""><path d="M0.500 0.400h1.900c0.300 0 0.500 0.200 0.600 0.500l0.200 0.900h8.800c0.400 0 0.600 0.300 0.500 0.700l-0.900 4c-0.100 0.300-0.300 0.500-0.600 0.500L4.100 7.800l0.200 0.800h6.500c0.300 0 0.600 0.200 0.600 0.600s-0.300 0.600-0.600 0.600H3.800c-0.300 0-0.500-0.200-0.600-0.500L1.900 1.500H0.500C0.200 1.500 0 1.300 0 1S0.200 0.400 0.500 0.400z"/><circle cx="4.700" cy="10.900" r="1.100"/><circle cx="10" cy="10.900" r="1.100"/></svg><span>冻结资金</span></a><a class="ob war" style="width:50px"><svg width="9.500" height="9" viewBox="0 0 12.500 12" fill="currentColor" style=""><path d="M0.500 0.400h1.900c0.300 0 0.500 0.200 0.600 0.500l0.200 0.900h8.800c0.400 0 0.600 0.300 0.500 0.700l-0.900 4c-0.100 0.300-0.300 0.500-0.600 0.500L4.100 7.800l0.200 0.800h6.500c0.300 0 0.600 0.200 0.600 0.600s-0.300 0.600-0.600 0.600H3.800c-0.300 0-0.500-0.200-0.600-0.500L1.900 1.500H0.500C0.200 1.500 0 1.300 0 1S0.200 0.400 0.500 0.400z"/><circle cx="4.700" cy="10.900" r="1.100"/><circle cx="10" cy="10.900" r="1.100"/></svg><span>信誉分</span></a><a class="ob inf" style="width:43px"><svg width="10.500" height="8.500" viewBox="0 0 13 11.500" fill="currentColor" style=""><path d="M0 0.300h1.700v9.500H13v1.700H0z"/><path d="M2.500 9V6.200L5 3l2.300 2.300L10 1.800l2.400 3.600V9z"/></svg><span>报表</span></a><a class="ob dan" style="width:67px"><svg width="7.500" height="9" viewBox="0 0 10 12" fill="currentColor" style=""><circle cx="5" cy="2.900" r="2.800"/><path d="M0.200 10.400C0.200 7.600 1.600 6 3.100 6c0.500 0.400 1.200 0.700 1.900 0.700S6.400 6.400 6.900 6c1.500 0 2.900 1.600 2.900 4.400 0 0.900-0.600 1.600-1.400 1.600H1.600c-0.800 0-1.400-0.700-1.400-1.600z"/></svg><span>设置黑名单</span></a><a class="ob dan" style="width:38.400px"><svg width="7.500" height="9" viewBox="0 0 10 12" fill="currentColor" style=""><circle cx="5" cy="2.900" r="2.800"/><path d="M0.200 10.400C0.200 7.600 1.600 6 3.100 6c0.500 0.400 1.200 0.700 1.900 0.700S6.400 6.400 6.900 6c1.500 0 2.900 1.600 2.900 4.400 0 0.900-0.600 1.600-1.400 1.600H1.600c-0.800 0-1.400-0.700-1.400-1.600z"/></svg><span>冻结</span></a><a class="ob suc" style="width:17.700px"><svg width="9.200" height="9.200" viewBox="0 0 12 12" fill="currentColor" style=""><path d="M0 12v-2.800l6.900-6.900 2.800 2.800L2.800 12H0zM7.700 1.500l1.200-1.200c0.400-0.400 1-0.400 1.400 0l1.400 1.400c0.400 0.400 0.400 1 0 1.400L10.500 4.300 7.700 1.500z"/></svg></a><a class="ob dan" style="width:17.700px"><svg width="8.600" height="9.600" viewBox="0.600 0 10.800 12" fill="currentColor" style=""><path fill-rule="evenodd" d="M4 1.200L4.500 0.300C4.600 0.100 4.800 0 5 0h2c0.200 0 0.400 0.100 0.500 0.300L8 1.200h2.500c0.300 0 0.500 0.200 0.500 0.500v0.600c0 0.200-0.100 0.300-0.300 0.300H1.300C1.100 2.600 1 2.500 1 2.300V1.700c0-0.300 0.200-0.500 0.500-0.500H4zM1.700 3.400h8.600v7.300c0 0.700-0.600 1.300-1.300 1.300H3c-0.700 0-1.300-0.600-1.300-1.300V3.400zM3.600 5v5.200h0.900V5H3.600zM5.500 5v5.200h0.900V5H5.500zM7.400 5v5.200h0.900V5H7.400z"/></svg></a></div>
<div class="oprow even" style="height:54px"><a class="ob suc" style="width:41.800px"><svg width="10" height="8.500" viewBox="0 0 12 12" fill="currentColor" style=""><rect x="0" y="0.500" width="12" height="2"/><rect x="0" y="3.500" width="12" height="2"/><rect x="0" y="6.500" width="12" height="2"/><rect x="0" y="9.500" width="12" height="2"/></svg><span>详情</span></a><a class="ob war" style="width:40.500px"><svg width="9.500" height="9" viewBox="0 0 12.500 12" fill="currentColor" style=""><path d="M0.500 0.400h1.900c0.300 0 0.500 0.200 0.600 0.500l0.200 0.900h8.800c0.400 0 0.600 0.300 0.500 0.700l-0.900 4c-0.100 0.300-0.300 0.500-0.600 0.500L4.100 7.800l0.200 0.800h6.500c0.300 0 0.600 0.200 0.600 0.600s-0.300 0.600-0.600 0.600H3.800c-0.300 0-0.500-0.200-0.600-0.500L1.900 1.500H0.500C0.200 1.500 0 1.300 0 1S0.200 0.400 0.500 0.400z"/><circle cx="4.700" cy="10.900" r="1.100"/><circle cx="10" cy="10.900" r="1.100"/></svg><span>分数</span></a><a class="ob inf" style="width:59.700px"><svg width="9.500" height="9" viewBox="0 0 12.500 12" fill="currentColor" style=""><path d="M0.500 0.400h1.900c0.300 0 0.500 0.200 0.600 0.500l0.200 0.900h8.800c0.400 0 0.600 0.300 0.500 0.700l-0.900 4c-0.100 0.300-0.300 0.500-0.600 0.500L4.100 7.800l0.200 0.800h6.500c0.300 0 0.600 0.200 0.600 0.600s-0.300 0.600-0.600 0.600H3.800c-0.300 0-0.500-0.200-0.600-0.500L1.900 1.500H0.500C0.200 1.500 0 1.300 0 1S0.200 0.400 0.500 0.400z"/><circle cx="4.700" cy="10.900" r="1.100"/><circle cx="10" cy="10.900" r="1.100"/></svg><span>实名认证</span></a><a class="ob war" style="width:59.700px"><svg width="9.500" height="9" viewBox="0 0 12.500 12" fill="currentColor" style=""><path d="M0.500 0.400h1.900c0.300 0 0.500 0.200 0.600 0.500l0.200 0.900h8.800c0.400 0 0.600 0.300 0.500 0.700l-0.900 4c-0.100 0.300-0.300 0.500-0.600 0.500L4.100 7.800l0.200 0.800h6.500c0.300 0 0.600 0.200 0.600 0.600s-0.300 0.600-0.600 0.600H3.800c-0.300 0-0.500-0.200-0.600-0.500L1.900 1.500H0.500C0.200 1.500 0 1.300 0 1S0.200 0.400 0.500 0.400z"/><circle cx="4.700" cy="10.900" r="1.100"/><circle cx="10" cy="10.900" r="1.100"/></svg><span>冻结资金</span></a><a class="ob war" style="width:50px"><svg width="9.500" height="9" viewBox="0 0 12.500 12" fill="currentColor" style=""><path d="M0.500 0.400h1.900c0.300 0 0.500 0.200 0.600 0.500l0.200 0.900h8.800c0.400 0 0.600 0.300 0.500 0.700l-0.900 4c-0.100 0.300-0.300 0.500-0.600 0.500L4.100 7.800l0.200 0.800h6.500c0.300 0 0.600 0.200 0.600 0.600s-0.300 0.600-0.600 0.600H3.800c-0.300 0-0.500-0.200-0.600-0.500L1.900 1.500H0.500C0.200 1.500 0 1.300 0 1S0.200 0.400 0.500 0.400z"/><circle cx="4.700" cy="10.900" r="1.100"/><circle cx="10" cy="10.900" r="1.100"/></svg><span>信誉分</span></a><a class="ob inf" style="width:43px"><svg width="10.500" height="8.500" viewBox="0 0 13 11.500" fill="currentColor" style=""><path d="M0 0.300h1.700v9.500H13v1.700H0z"/><path d="M2.500 9V6.200L5 3l2.300 2.300L10 1.800l2.400 3.600V9z"/></svg><span>报表</span></a><a class="ob dan" style="width:67px"><svg width="7.500" height="9" viewBox="0 0 10 12" fill="currentColor" style=""><circle cx="5" cy="2.900" r="2.800"/><path d="M0.200 10.400C0.200 7.600 1.600 6 3.100 6c0.500 0.400 1.200 0.700 1.900 0.700S6.400 6.400 6.900 6c1.500 0 2.900 1.600 2.900 4.400 0 0.900-0.600 1.600-1.400 1.600H1.600c-0.800 0-1.400-0.700-1.400-1.600z"/></svg><span>设置黑名单</span></a><a class="ob dan" style="width:38.400px"><svg width="7.500" height="9" viewBox="0 0 10 12" fill="currentColor" style=""><circle cx="5" cy="2.900" r="2.800"/><path d="M0.200 10.400C0.200 7.600 1.600 6 3.100 6c0.500 0.400 1.200 0.700 1.900 0.700S6.400 6.400 6.900 6c1.500 0 2.900 1.600 2.900 4.400 0 0.900-0.600 1.600-1.400 1.600H1.600c-0.800 0-1.400-0.700-1.400-1.600z"/></svg><span>冻结</span></a><a class="ob suc" style="width:17.700px"><svg width="9.200" height="9.200" viewBox="0 0 12 12" fill="currentColor" style=""><path d="M0 12v-2.800l6.900-6.900 2.800 2.800L2.800 12H0zM7.700 1.500l1.200-1.200c0.400-0.400 1-0.400 1.400 0l1.400 1.400c0.400 0.400 0.400 1 0 1.400L10.500 4.300 7.700 1.500z"/></svg></a><a class="ob dan" style="width:17.700px"><svg width="8.600" height="9.600" viewBox="0.600 0 10.800 12" fill="currentColor" style=""><path fill-rule="evenodd" d="M4 1.200L4.500 0.300C4.600 0.100 4.800 0 5 0h2c0.200 0 0.400 0.100 0.500 0.300L8 1.200h2.500c0.300 0 0.500 0.200 0.500 0.500v0.600c0 0.200-0.100 0.300-0.300 0.300H1.300C1.100 2.600 1 2.500 1 2.300V1.700c0-0.300 0.200-0.500 0.500-0.500H4zM1.700 3.400h8.600v7.300c0 0.700-0.600 1.300-1.300 1.300H3c-0.700 0-1.300-0.600-1.300-1.300V3.400zM3.600 5v5.200h0.900V5H3.600zM5.500 5v5.200h0.900V5H5.500zM7.400 5v5.200h0.900V5H7.400z"/></svg></a></div>
<div class="oprow odd" style="height:54px"><a class="ob suc" style="width:41.800px"><svg width="10" height="8.500" viewBox="0 0 12 12" fill="currentColor" style=""><rect x="0" y="0.500" width="12" height="2"/><rect x="0" y="3.500" width="12" height="2"/><rect x="0" y="6.500" width="12" height="2"/><rect x="0" y="9.500" width="12" height="2"/></svg><span>详情</span></a><a class="ob war" style="width:40.500px"><svg width="9.500" height="9" viewBox="0 0 12.500 12" fill="currentColor" style=""><path d="M0.500 0.400h1.900c0.300 0 0.500 0.200 0.600 0.500l0.200 0.900h8.800c0.400 0 0.600 0.300 0.500 0.700l-0.900 4c-0.100 0.300-0.300 0.500-0.600 0.500L4.100 7.800l0.200 0.800h6.500c0.300 0 0.600 0.200 0.600 0.600s-0.300 0.600-0.600 0.600H3.800c-0.300 0-0.500-0.200-0.600-0.500L1.900 1.500H0.500C0.200 1.500 0 1.300 0 1S0.200 0.400 0.500 0.400z"/><circle cx="4.700" cy="10.900" r="1.100"/><circle cx="10" cy="10.900" r="1.100"/></svg><span>分数</span></a><a class="ob inf" style="width:59.700px"><svg width="9.500" height="9" viewBox="0 0 12.500 12" fill="currentColor" style=""><path d="M0.500 0.400h1.900c0.300 0 0.500 0.200 0.600 0.500l0.200 0.900h8.800c0.400 0 0.600 0.300 0.500 0.700l-0.900 4c-0.100 0.300-0.300 0.500-0.600 0.500L4.100 7.800l0.200 0.800h6.500c0.300 0 0.600 0.200 0.600 0.600s-0.300 0.600-0.600 0.600H3.800c-0.300 0-0.500-0.200-0.600-0.500L1.900 1.500H0.500C0.200 1.500 0 1.300 0 1S0.200 0.400 0.500 0.400z"/><circle cx="4.700" cy="10.900" r="1.100"/><circle cx="10" cy="10.900" r="1.100"/></svg><span>实名认证</span></a><a class="ob war" style="width:59.700px"><svg width="9.500" height="9" viewBox="0 0 12.500 12" fill="currentColor" style=""><path d="M0.500 0.400h1.900c0.300 0 0.500 0.200 0.600 0.500l0.200 0.900h8.800c0.400 0 0.600 0.300 0.500 0.700l-0.900 4c-0.100 0.300-0.300 0.500-0.600 0.500L4.100 7.800l0.200 0.800h6.500c0.300 0 0.600 0.200 0.600 0.600s-0.300 0.600-0.600 0.600H3.800c-0.300 0-0.500-0.200-0.600-0.500L1.900 1.500H0.500C0.200 1.500 0 1.300 0 1S0.200 0.400 0.500 0.400z"/><circle cx="4.700" cy="10.900" r="1.100"/><circle cx="10" cy="10.900" r="1.100"/></svg><span>冻结资金</span></a><a class="ob war" style="width:50px"><svg width="9.500" height="9" viewBox="0 0 12.500 12" fill="currentColor" style=""><path d="M0.500 0.400h1.900c0.300 0 0.500 0.200 0.600 0.500l0.200 0.900h8.800c0.400 0 0.600 0.300 0.500 0.700l-0.900 4c-0.100 0.300-0.300 0.500-0.600 0.500L4.100 7.800l0.200 0.800h6.500c0.300 0 0.600 0.200 0.600 0.600s-0.300 0.600-0.600 0.600H3.800c-0.300 0-0.500-0.200-0.600-0.500L1.900 1.500H0.500C0.200 1.500 0 1.300 0 1S0.200 0.400 0.500 0.400z"/><circle cx="4.700" cy="10.900" r="1.100"/><circle cx="10" cy="10.900" r="1.100"/></svg><span>信誉分</span></a><a class="ob inf" style="width:43px"><svg width="10.500" height="8.500" viewBox="0 0 13 11.500" fill="currentColor" style=""><path d="M0 0.300h1.700v9.500H13v1.700H0z"/><path d="M2.500 9V6.200L5 3l2.300 2.300L10 1.800l2.400 3.600V9z"/></svg><span>报表</span></a><a class="ob dan" style="width:67px"><svg width="7.500" height="9" viewBox="0 0 10 12" fill="currentColor" style=""><circle cx="5" cy="2.900" r="2.800"/><path d="M0.200 10.400C0.200 7.600 1.600 6 3.100 6c0.500 0.400 1.200 0.700 1.900 0.700S6.400 6.400 6.900 6c1.500 0 2.900 1.600 2.900 4.400 0 0.900-0.600 1.600-1.400 1.600H1.600c-0.800 0-1.400-0.700-1.400-1.600z"/></svg><span>设置黑名单</span></a><a class="ob dan" style="width:38.400px"><svg width="7.500" height="9" viewBox="0 0 10 12" fill="currentColor" style=""><circle cx="5" cy="2.900" r="2.800"/><path d="M0.200 10.400C0.200 7.600 1.600 6 3.100 6c0.500 0.400 1.200 0.700 1.900 0.700S6.400 6.400 6.900 6c1.500 0 2.900 1.600 2.900 4.400 0 0.900-0.600 1.600-1.400 1.600H1.600c-0.800 0-1.400-0.700-1.400-1.600z"/></svg><span>冻结</span></a><a class="ob suc" style="width:17.700px"><svg width="9.200" height="9.200" viewBox="0 0 12 12" fill="currentColor" style=""><path d="M0 12v-2.800l6.900-6.900 2.800 2.800L2.800 12H0zM7.700 1.500l1.200-1.200c0.400-0.400 1-0.400 1.400 0l1.400 1.400c0.400 0.400 0.400 1 0 1.400L10.500 4.300 7.700 1.500z"/></svg></a><a class="ob dan" style="width:17.700px"><svg width="8.600" height="9.600" viewBox="0.600 0 10.800 12" fill="currentColor" style=""><path fill-rule="evenodd" d="M4 1.200L4.500 0.300C4.600 0.100 4.800 0 5 0h2c0.200 0 0.400 0.100 0.500 0.300L8 1.200h2.500c0.300 0 0.500 0.200 0.500 0.500v0.600c0 0.200-0.100 0.300-0.300 0.300H1.300C1.100 2.600 1 2.500 1 2.300V1.700c0-0.300 0.200-0.500 0.500-0.500H4zM1.700 3.400h8.600v7.300c0 0.700-0.600 1.300-1.300 1.300H3c-0.700 0-1.300-0.600-1.300-1.300V3.400zM3.600 5v5.200h0.900V5H3.600zM5.500 5v5.200h0.900V5H5.500zM7.400 5v5.200h0.900V5H7.400z"/></svg></a></div>
<div class="oprow even" style="height:54px"><a class="ob suc" style="width:41.800px"><svg width="10" height="8.500" viewBox="0 0 12 12" fill="currentColor" style=""><rect x="0" y="0.500" width="12" height="2"/><rect x="0" y="3.500" width="12" height="2"/><rect x="0" y="6.500" width="12" height="2"/><rect x="0" y="9.500" width="12" height="2"/></svg><span>详情</span></a><a class="ob war" style="width:40.500px"><svg width="9.500" height="9" viewBox="0 0 12.500 12" fill="currentColor" style=""><path d="M0.500 0.400h1.900c0.300 0 0.500 0.200 0.600 0.500l0.200 0.900h8.800c0.400 0 0.600 0.300 0.500 0.700l-0.900 4c-0.100 0.300-0.300 0.500-0.600 0.500L4.100 7.800l0.200 0.800h6.500c0.300 0 0.600 0.200 0.600 0.600s-0.300 0.600-0.600 0.600H3.800c-0.300 0-0.500-0.200-0.600-0.500L1.900 1.500H0.500C0.200 1.500 0 1.300 0 1S0.200 0.400 0.500 0.400z"/><circle cx="4.700" cy="10.900" r="1.100"/><circle cx="10" cy="10.900" r="1.100"/></svg><span>分数</span></a><a class="ob inf" style="width:59.700px"><svg width="9.500" height="9" viewBox="0 0 12.500 12" fill="currentColor" style=""><path d="M0.500 0.400h1.900c0.300 0 0.500 0.200 0.600 0.500l0.200 0.900h8.800c0.400 0 0.600 0.300 0.500 0.700l-0.900 4c-0.100 0.300-0.300 0.500-0.600 0.500L4.100 7.800l0.200 0.800h6.500c0.300 0 0.600 0.200 0.600 0.600s-0.300 0.600-0.600 0.600H3.800c-0.300 0-0.500-0.200-0.600-0.500L1.900 1.500H0.500C0.200 1.500 0 1.300 0 1S0.200 0.400 0.500 0.400z"/><circle cx="4.700" cy="10.900" r="1.100"/><circle cx="10" cy="10.900" r="1.100"/></svg><span>实名认证</span></a><a class="ob war" style="width:59.700px"><svg width="9.500" height="9" viewBox="0 0 12.500 12" fill="currentColor" style=""><path d="M0.500 0.400h1.900c0.300 0 0.500 0.200 0.600 0.500l0.200 0.900h8.800c0.400 0 0.600 0.300 0.500 0.700l-0.900 4c-0.100 0.300-0.300 0.500-0.600 0.500L4.100 7.800l0.200 0.800h6.500c0.300 0 0.600 0.200 0.600 0.600s-0.300 0.600-0.600 0.600H3.800c-0.300 0-0.500-0.200-0.600-0.500L1.900 1.500H0.500C0.200 1.500 0 1.300 0 1S0.200 0.400 0.500 0.400z"/><circle cx="4.700" cy="10.900" r="1.100"/><circle cx="10" cy="10.900" r="1.100"/></svg><span>冻结资金</span></a><a class="ob war" style="width:50px"><svg width="9.500" height="9" viewBox="0 0 12.500 12" fill="currentColor" style=""><path d="M0.500 0.400h1.900c0.300 0 0.500 0.200 0.600 0.500l0.200 0.900h8.800c0.400 0 0.600 0.300 0.500 0.700l-0.900 4c-0.100 0.300-0.300 0.500-0.600 0.500L4.100 7.800l0.200 0.800h6.500c0.300 0 0.600 0.200 0.600 0.600s-0.300 0.600-0.600 0.600H3.800c-0.300 0-0.500-0.200-0.600-0.500L1.900 1.500H0.500C0.200 1.500 0 1.300 0 1S0.200 0.400 0.500 0.400z"/><circle cx="4.700" cy="10.900" r="1.100"/><circle cx="10" cy="10.900" r="1.100"/></svg><span>信誉分</span></a><a class="ob inf" style="width:43px"><svg width="10.500" height="8.500" viewBox="0 0 13 11.500" fill="currentColor" style=""><path d="M0 0.300h1.700v9.500H13v1.700H0z"/><path d="M2.500 9V6.200L5 3l2.300 2.300L10 1.800l2.400 3.600V9z"/></svg><span>报表</span></a><a class="ob dan" style="width:67px"><svg width="7.500" height="9" viewBox="0 0 10 12" fill="currentColor" style=""><circle cx="5" cy="2.900" r="2.800"/><path d="M0.200 10.400C0.200 7.600 1.600 6 3.100 6c0.500 0.400 1.200 0.700 1.900 0.700S6.400 6.400 6.900 6c1.500 0 2.900 1.600 2.900 4.400 0 0.900-0.600 1.600-1.400 1.600H1.600c-0.800 0-1.400-0.700-1.400-1.600z"/></svg><span>设置黑名单</span></a><a class="ob dan" style="width:38.400px"><svg width="7.500" height="9" viewBox="0 0 10 12" fill="currentColor" style=""><circle cx="5" cy="2.900" r="2.800"/><path d="M0.200 10.400C0.200 7.600 1.600 6 3.100 6c0.500 0.400 1.200 0.700 1.900 0.700S6.400 6.400 6.900 6c1.500 0 2.900 1.600 2.900 4.400 0 0.900-0.600 1.600-1.400 1.600H1.600c-0.800 0-1.400-0.700-1.400-1.600z"/></svg><span>冻结</span></a><a class="ob suc" style="width:17.700px"><svg width="9.200" height="9.200" viewBox="0 0 12 12" fill="currentColor" style=""><path d="M0 12v-2.800l6.900-6.900 2.800 2.800L2.800 12H0zM7.700 1.500l1.200-1.200c0.400-0.400 1-0.400 1.400 0l1.400 1.400c0.400 0.400 0.400 1 0 1.400L10.500 4.300 7.700 1.500z"/></svg></a><a class="ob dan" style="width:17.700px"><svg width="8.600" height="9.600" viewBox="0.600 0 10.800 12" fill="currentColor" style=""><path fill-rule="evenodd" d="M4 1.200L4.500 0.300C4.600 0.100 4.800 0 5 0h2c0.200 0 0.400 0.100 0.500 0.300L8 1.200h2.500c0.300 0 0.500 0.200 0.500 0.500v0.600c0 0.200-0.100 0.300-0.300 0.300H1.300C1.100 2.600 1 2.500 1 2.300V1.700c0-0.300 0.200-0.500 0.500-0.500H4zM1.700 3.400h8.600v7.300c0 0.700-0.600 1.300-1.300 1.300H3c-0.700 0-1.300-0.600-1.300-1.300V3.400zM3.600 5v5.200h0.900V5H3.600zM5.500 5v5.200h0.900V5H5.500zM7.400 5v5.200h0.900V5H7.400z"/></svg></a></div>
<div class="oprow odd" style="height:54px"><a class="ob suc" style="width:41.800px"><svg width="10" height="8.500" viewBox="0 0 12 12" fill="currentColor" style=""><rect x="0" y="0.500" width="12" height="2"/><rect x="0" y="3.500" width="12" height="2"/><rect x="0" y="6.500" width="12" height="2"/><rect x="0" y="9.500" width="12" height="2"/></svg><span>详情</span></a><a class="ob war" style="width:40.500px"><svg width="9.500" height="9" viewBox="0 0 12.500 12" fill="currentColor" style=""><path d="M0.500 0.400h1.900c0.300 0 0.500 0.200 0.600 0.500l0.200 0.900h8.800c0.400 0 0.600 0.300 0.500 0.700l-0.900 4c-0.100 0.300-0.300 0.500-0.600 0.500L4.100 7.800l0.200 0.800h6.500c0.300 0 0.600 0.200 0.600 0.600s-0.300 0.600-0.600 0.600H3.800c-0.300 0-0.500-0.200-0.600-0.500L1.900 1.500H0.500C0.200 1.500 0 1.300 0 1S0.200 0.400 0.500 0.400z"/><circle cx="4.700" cy="10.900" r="1.100"/><circle cx="10" cy="10.900" r="1.100"/></svg><span>分数</span></a><a class="ob inf" style="width:59.700px"><svg width="9.500" height="9" viewBox="0 0 12.500 12" fill="currentColor" style=""><path d="M0.500 0.400h1.900c0.300 0 0.500 0.200 0.600 0.500l0.200 0.900h8.800c0.400 0 0.600 0.300 0.500 0.700l-0.900 4c-0.100 0.300-0.300 0.500-0.600 0.500L4.100 7.800l0.200 0.800h6.500c0.300 0 0.600 0.200 0.600 0.600s-0.300 0.600-0.600 0.600H3.800c-0.300 0-0.500-0.200-0.600-0.500L1.900 1.500H0.500C0.200 1.500 0 1.300 0 1S0.200 0.400 0.500 0.400z"/><circle cx="4.700" cy="10.900" r="1.100"/><circle cx="10" cy="10.900" r="1.100"/></svg><span>实名认证</span></a><a class="ob war" style="width:59.700px"><svg width="9.500" height="9" viewBox="0 0 12.500 12" fill="currentColor" style=""><path d="M0.500 0.400h1.900c0.300 0 0.500 0.200 0.600 0.500l0.200 0.900h8.800c0.400 0 0.600 0.300 0.500 0.700l-0.900 4c-0.100 0.300-0.300 0.500-0.600 0.500L4.100 7.800l0.200 0.800h6.500c0.300 0 0.600 0.200 0.600 0.600s-0.300 0.600-0.600 0.600H3.800c-0.300 0-0.500-0.200-0.600-0.500L1.900 1.500H0.500C0.200 1.500 0 1.300 0 1S0.200 0.400 0.500 0.400z"/><circle cx="4.700" cy="10.900" r="1.100"/><circle cx="10" cy="10.900" r="1.100"/></svg><span>冻结资金</span></a><a class="ob war" style="width:50px"><svg width="9.500" height="9" viewBox="0 0 12.500 12" fill="currentColor" style=""><path d="M0.500 0.400h1.900c0.300 0 0.500 0.200 0.600 0.500l0.200 0.900h8.800c0.400 0 0.600 0.300 0.500 0.700l-0.900 4c-0.100 0.300-0.300 0.500-0.600 0.500L4.100 7.800l0.200 0.800h6.500c0.300 0 0.600 0.200 0.600 0.600s-0.300 0.600-0.600 0.600H3.800c-0.300 0-0.500-0.200-0.600-0.500L1.900 1.500H0.500C0.200 1.500 0 1.300 0 1S0.200 0.400 0.500 0.400z"/><circle cx="4.700" cy="10.900" r="1.100"/><circle cx="10" cy="10.900" r="1.100"/></svg><span>信誉分</span></a><a class="ob inf" style="width:43px"><svg width="10.500" height="8.500" viewBox="0 0 13 11.500" fill="currentColor" style=""><path d="M0 0.300h1.700v9.500H13v1.700H0z"/><path d="M2.500 9V6.200L5 3l2.300 2.300L10 1.800l2.400 3.600V9z"/></svg><span>报表</span></a><a class="ob dan" style="width:67px"><svg width="7.500" height="9" viewBox="0 0 10 12" fill="currentColor" style=""><circle cx="5" cy="2.900" r="2.800"/><path d="M0.200 10.400C0.200 7.600 1.600 6 3.100 6c0.500 0.400 1.200 0.700 1.900 0.700S6.400 6.400 6.900 6c1.500 0 2.900 1.600 2.900 4.400 0 0.900-0.600 1.600-1.400 1.600H1.600c-0.800 0-1.400-0.700-1.400-1.600z"/></svg><span>设置黑名单</span></a><a class="ob dan" style="width:38.400px"><svg width="7.500" height="9" viewBox="0 0 10 12" fill="currentColor" style=""><circle cx="5" cy="2.900" r="2.800"/><path d="M0.200 10.400C0.200 7.600 1.600 6 3.100 6c0.500 0.400 1.200 0.700 1.900 0.700S6.400 6.400 6.900 6c1.500 0 2.900 1.600 2.900 4.400 0 0.900-0.600 1.600-1.400 1.600H1.600c-0.800 0-1.400-0.700-1.400-1.600z"/></svg><span>冻结</span></a><a class="ob suc" style="width:17.700px"><svg width="9.200" height="9.200" viewBox="0 0 12 12" fill="currentColor" style=""><path d="M0 12v-2.800l6.900-6.900 2.800 2.800L2.800 12H0zM7.700 1.500l1.200-1.200c0.400-0.400 1-0.400 1.400 0l1.400 1.400c0.400 0.400 0.400 1 0 1.400L10.500 4.300 7.700 1.500z"/></svg></a><a class="ob dan" style="width:17.700px"><svg width="8.600" height="9.600" viewBox="0.600 0 10.800 12" fill="currentColor" style=""><path fill-rule="evenodd" d="M4 1.200L4.500 0.300C4.600 0.100 4.800 0 5 0h2c0.200 0 0.400 0.100 0.500 0.300L8 1.200h2.500c0.300 0 0.500 0.200 0.500 0.500v0.600c0 0.200-0.100 0.300-0.300 0.300H1.300C1.100 2.600 1 2.500 1 2.300V1.700c0-0.300 0.200-0.500 0.500-0.500H4zM1.700 3.400h8.600v7.300c0 0.700-0.600 1.300-1.300 1.300H3c-0.700 0-1.300-0.600-1.300-1.300V3.400zM3.600 5v5.200h0.900V5H3.600zM5.500 5v5.200h0.900V5H5.500zM7.400 5v5.200h0.900V5H7.400z"/></svg></a></div>
<div class="oprow even" style="height:55px"><a class="ob suc" style="width:41.800px"><svg width="10" height="8.500" viewBox="0 0 12 12" fill="currentColor" style=""><rect x="0" y="0.500" width="12" height="2"/><rect x="0" y="3.500" width="12" height="2"/><rect x="0" y="6.500" width="12" height="2"/><rect x="0" y="9.500" width="12" height="2"/></svg><span>详情</span></a><a class="ob war" style="width:40.500px"><svg width="9.500" height="9" viewBox="0 0 12.500 12" fill="currentColor" style=""><path d="M0.500 0.400h1.900c0.300 0 0.500 0.200 0.600 0.500l0.200 0.900h8.800c0.400 0 0.600 0.300 0.500 0.700l-0.900 4c-0.100 0.300-0.300 0.500-0.600 0.500L4.100 7.800l0.200 0.800h6.500c0.300 0 0.600 0.200 0.600 0.600s-0.300 0.600-0.600 0.600H3.800c-0.300 0-0.500-0.200-0.600-0.500L1.900 1.500H0.500C0.200 1.500 0 1.300 0 1S0.200 0.400 0.500 0.400z"/><circle cx="4.700" cy="10.900" r="1.100"/><circle cx="10" cy="10.900" r="1.100"/></svg><span>分数</span></a><a class="ob inf" style="width:59.700px"><svg width="9.500" height="9" viewBox="0 0 12.500 12" fill="currentColor" style=""><path d="M0.500 0.400h1.900c0.300 0 0.500 0.200 0.600 0.500l0.200 0.900h8.800c0.400 0 0.600 0.300 0.500 0.700l-0.900 4c-0.100 0.300-0.300 0.500-0.600 0.500L4.100 7.800l0.200 0.800h6.500c0.300 0 0.600 0.200 0.600 0.600s-0.300 0.600-0.600 0.600H3.800c-0.300 0-0.500-0.200-0.600-0.500L1.900 1.500H0.500C0.200 1.500 0 1.300 0 1S0.200 0.400 0.500 0.400z"/><circle cx="4.700" cy="10.900" r="1.100"/><circle cx="10" cy="10.900" r="1.100"/></svg><span>实名认证</span></a><a class="ob war" style="width:59.700px"><svg width="9.500" height="9" viewBox="0 0 12.500 12" fill="currentColor" style=""><path d="M0.500 0.400h1.900c0.300 0 0.500 0.200 0.600 0.500l0.200 0.900h8.800c0.400 0 0.600 0.300 0.500 0.700l-0.900 4c-0.100 0.300-0.300 0.500-0.600 0.500L4.100 7.800l0.200 0.800h6.500c0.300 0 0.600 0.200 0.600 0.600s-0.300 0.600-0.600 0.600H3.800c-0.300 0-0.500-0.200-0.600-0.500L1.900 1.500H0.500C0.200 1.500 0 1.300 0 1S0.200 0.400 0.500 0.400z"/><circle cx="4.700" cy="10.900" r="1.100"/><circle cx="10" cy="10.900" r="1.100"/></svg><span>冻结资金</span></a><a class="ob war" style="width:50px"><svg width="9.500" height="9" viewBox="0 0 12.500 12" fill="currentColor" style=""><path d="M0.500 0.400h1.900c0.300 0 0.500 0.200 0.600 0.500l0.200 0.900h8.800c0.400 0 0.600 0.300 0.500 0.700l-0.900 4c-0.100 0.300-0.300 0.500-0.600 0.500L4.100 7.800l0.200 0.800h6.500c0.300 0 0.600 0.200 0.600 0.600s-0.300 0.600-0.600 0.600H3.800c-0.300 0-0.500-0.200-0.600-0.500L1.900 1.500H0.500C0.200 1.500 0 1.300 0 1S0.200 0.400 0.500 0.400z"/><circle cx="4.700" cy="10.900" r="1.100"/><circle cx="10" cy="10.900" r="1.100"/></svg><span>信誉分</span></a><a class="ob inf" style="width:43px"><svg width="10.500" height="8.500" viewBox="0 0 13 11.500" fill="currentColor" style=""><path d="M0 0.300h1.700v9.500H13v1.700H0z"/><path d="M2.500 9V6.200L5 3l2.300 2.300L10 1.800l2.400 3.600V9z"/></svg><span>报表</span></a><a class="ob dan" style="width:67px"><svg width="7.500" height="9" viewBox="0 0 10 12" fill="currentColor" style=""><circle cx="5" cy="2.900" r="2.800"/><path d="M0.200 10.400C0.200 7.600 1.600 6 3.100 6c0.500 0.400 1.200 0.700 1.900 0.700S6.400 6.400 6.900 6c1.500 0 2.900 1.600 2.900 4.400 0 0.900-0.600 1.600-1.400 1.600H1.600c-0.800 0-1.400-0.700-1.400-1.600z"/></svg><span>设置黑名单</span></a><a class="ob dan" style="width:38.400px"><svg width="7.500" height="9" viewBox="0 0 10 12" fill="currentColor" style=""><circle cx="5" cy="2.900" r="2.800"/><path d="M0.200 10.400C0.200 7.600 1.600 6 3.100 6c0.500 0.400 1.200 0.700 1.900 0.700S6.400 6.400 6.900 6c1.500 0 2.900 1.600 2.900 4.400 0 0.900-0.600 1.600-1.400 1.600H1.600c-0.800 0-1.400-0.700-1.400-1.600z"/></svg><span>冻结</span></a><a class="ob suc" style="width:17.700px"><svg width="9.200" height="9.200" viewBox="0 0 12 12" fill="currentColor" style=""><path d="M0 12v-2.800l6.900-6.900 2.800 2.800L2.800 12H0zM7.700 1.500l1.200-1.200c0.400-0.400 1-0.400 1.400 0l1.400 1.400c0.400 0.400 0.400 1 0 1.400L10.500 4.300 7.700 1.500z"/></svg></a><a class="ob dan" style="width:17.700px"><svg width="8.600" height="9.600" viewBox="0.600 0 10.800 12" fill="currentColor" style=""><path fill-rule="evenodd" d="M4 1.200L4.500 0.300C4.600 0.100 4.800 0 5 0h2c0.200 0 0.400 0.100 0.500 0.300L8 1.200h2.500c0.300 0 0.500 0.200 0.500 0.500v0.600c0 0.200-0.100 0.300-0.300 0.300H1.300C1.100 2.600 1 2.500 1 2.300V1.700c0-0.300 0.200-0.500 0.500-0.500H4zM1.700 3.400h8.600v7.300c0 0.700-0.600 1.300-1.300 1.300H3c-0.700 0-1.300-0.600-1.300-1.300V3.400zM3.600 5v5.200h0.900V5H3.600zM5.500 5v5.200h0.900V5H5.500zM7.400 5v5.200h0.900V5H7.400z"/></svg></a></div>
<div class="oprow odd" style="height:54px"><a class="ob suc" style="width:41.800px"><svg width="10" height="8.500" viewBox="0 0 12 12" fill="currentColor" style=""><rect x="0" y="0.500" width="12" height="2"/><rect x="0" y="3.500" width="12" height="2"/><rect x="0" y="6.500" width="12" height="2"/><rect x="0" y="9.500" width="12" height="2"/></svg><span>详情</span></a><a class="ob war" style="width:40.500px"><svg width="9.500" height="9" viewBox="0 0 12.500 12" fill="currentColor" style=""><path d="M0.500 0.400h1.900c0.300 0 0.500 0.200 0.600 0.500l0.200 0.900h8.800c0.400 0 0.600 0.300 0.500 0.700l-0.900 4c-0.100 0.300-0.300 0.500-0.600 0.500L4.100 7.800l0.200 0.800h6.500c0.300 0 0.600 0.200 0.600 0.600s-0.300 0.600-0.600 0.600H3.800c-0.300 0-0.500-0.200-0.600-0.500L1.900 1.500H0.500C0.200 1.500 0 1.300 0 1S0.200 0.400 0.500 0.400z"/><circle cx="4.700" cy="10.900" r="1.100"/><circle cx="10" cy="10.900" r="1.100"/></svg><span>分数</span></a><a class="ob inf" style="width:59.700px"><svg width="9.500" height="9" viewBox="0 0 12.500 12" fill="currentColor" style=""><path d="M0.500 0.400h1.900c0.300 0 0.500 0.200 0.600 0.500l0.200 0.900h8.800c0.400 0 0.600 0.300 0.500 0.700l-0.900 4c-0.100 0.300-0.300 0.500-0.600 0.500L4.100 7.800l0.200 0.800h6.500c0.300 0 0.600 0.200 0.600 0.600s-0.300 0.600-0.600 0.600H3.800c-0.300 0-0.500-0.200-0.600-0.500L1.900 1.500H0.500C0.200 1.500 0 1.300 0 1S0.200 0.400 0.500 0.400z"/><circle cx="4.700" cy="10.900" r="1.100"/><circle cx="10" cy="10.900" r="1.100"/></svg><span>实名认证</span></a><a class="ob war" style="width:59.700px"><svg width="9.500" height="9" viewBox="0 0 12.500 12" fill="currentColor" style=""><path d="M0.500 0.400h1.900c0.300 0 0.500 0.200 0.600 0.500l0.200 0.900h8.800c0.400 0 0.600 0.300 0.500 0.700l-0.900 4c-0.100 0.300-0.300 0.500-0.600 0.500L4.100 7.800l0.200 0.800h6.500c0.300 0 0.600 0.200 0.600 0.600s-0.300 0.600-0.600 0.600H3.800c-0.300 0-0.500-0.200-0.600-0.500L1.900 1.500H0.500C0.200 1.500 0 1.300 0 1S0.200 0.400 0.500 0.400z"/><circle cx="4.700" cy="10.900" r="1.100"/><circle cx="10" cy="10.900" r="1.100"/></svg><span>冻结资金</span></a><a class="ob war" style="width:50px"><svg width="9.500" height="9" viewBox="0 0 12.500 12" fill="currentColor" style=""><path d="M0.500 0.400h1.900c0.300 0 0.500 0.200 0.600 0.500l0.200 0.900h8.800c0.400 0 0.600 0.300 0.500 0.700l-0.900 4c-0.100 0.300-0.300 0.500-0.600 0.500L4.100 7.800l0.200 0.800h6.500c0.300 0 0.600 0.200 0.600 0.600s-0.300 0.600-0.600 0.600H3.800c-0.300 0-0.500-0.200-0.600-0.500L1.900 1.500H0.500C0.200 1.500 0 1.300 0 1S0.200 0.400 0.500 0.400z"/><circle cx="4.700" cy="10.900" r="1.100"/><circle cx="10" cy="10.900" r="1.100"/></svg><span>信誉分</span></a><a class="ob inf" style="width:43px"><svg width="10.500" height="8.500" viewBox="0 0 13 11.500" fill="currentColor" style=""><path d="M0 0.300h1.700v9.500H13v1.700H0z"/><path d="M2.500 9V6.200L5 3l2.300 2.300L10 1.800l2.400 3.600V9z"/></svg><span>报表</span></a><a class="ob dan" style="width:67px"><svg width="7.500" height="9" viewBox="0 0 10 12" fill="currentColor" style=""><circle cx="5" cy="2.900" r="2.800"/><path d="M0.200 10.400C0.200 7.600 1.600 6 3.100 6c0.500 0.400 1.200 0.700 1.900 0.700S6.400 6.400 6.900 6c1.500 0 2.900 1.600 2.900 4.400 0 0.900-0.600 1.600-1.400 1.600H1.600c-0.800 0-1.400-0.700-1.400-1.600z"/></svg><span>设置黑名单</span></a><a class="ob dan" style="width:38.400px"><svg width="7.500" height="9" viewBox="0 0 10 12" fill="currentColor" style=""><circle cx="5" cy="2.900" r="2.800"/><path d="M0.200 10.400C0.200 7.600 1.600 6 3.100 6c0.500 0.400 1.200 0.700 1.900 0.700S6.400 6.400 6.900 6c1.500 0 2.900 1.600 2.900 4.400 0 0.900-0.600 1.600-1.400 1.600H1.600c-0.800 0-1.400-0.700-1.400-1.600z"/></svg><span>冻结</span></a><a class="ob suc" style="width:17.700px"><svg width="9.200" height="9.200" viewBox="0 0 12 12" fill="currentColor" style=""><path d="M0 12v-2.800l6.900-6.900 2.800 2.800L2.800 12H0zM7.700 1.500l1.200-1.200c0.400-0.400 1-0.400 1.400 0l1.400 1.400c0.400 0.400 0.400 1 0 1.400L10.500 4.300 7.700 1.500z"/></svg></a><a class="ob dan" style="width:17.700px"><svg width="8.600" height="9.600" viewBox="0.600 0 10.800 12" fill="currentColor" style=""><path fill-rule="evenodd" d="M4 1.200L4.500 0.300C4.600 0.100 4.800 0 5 0h2c0.200 0 0.400 0.100 0.500 0.300L8 1.200h2.500c0.300 0 0.500 0.200 0.500 0.500v0.600c0 0.200-0.100 0.300-0.300 0.300H1.300C1.100 2.600 1 2.500 1 2.300V1.700c0-0.300 0.200-0.500 0.500-0.500H4zM1.700 3.400h8.600v7.300c0 0.700-0.600 1.300-1.300 1.300H3c-0.700 0-1.300-0.600-1.300-1.300V3.400zM3.600 5v5.200h0.900V5H3.600zM5.500 5v5.200h0.900V5H5.500zM7.400 5v5.200h0.900V5H7.400z"/></svg></a></div>

  </div>

</div>
<div class="abs" style="left:1274px;top:45px;width:6px;height:765px;background:#fafafa"></div>
<div class="abs" style="left:1278px;top:62px;width:2px;height:634px;background:#7a7a7a"></div>

</body></html>
